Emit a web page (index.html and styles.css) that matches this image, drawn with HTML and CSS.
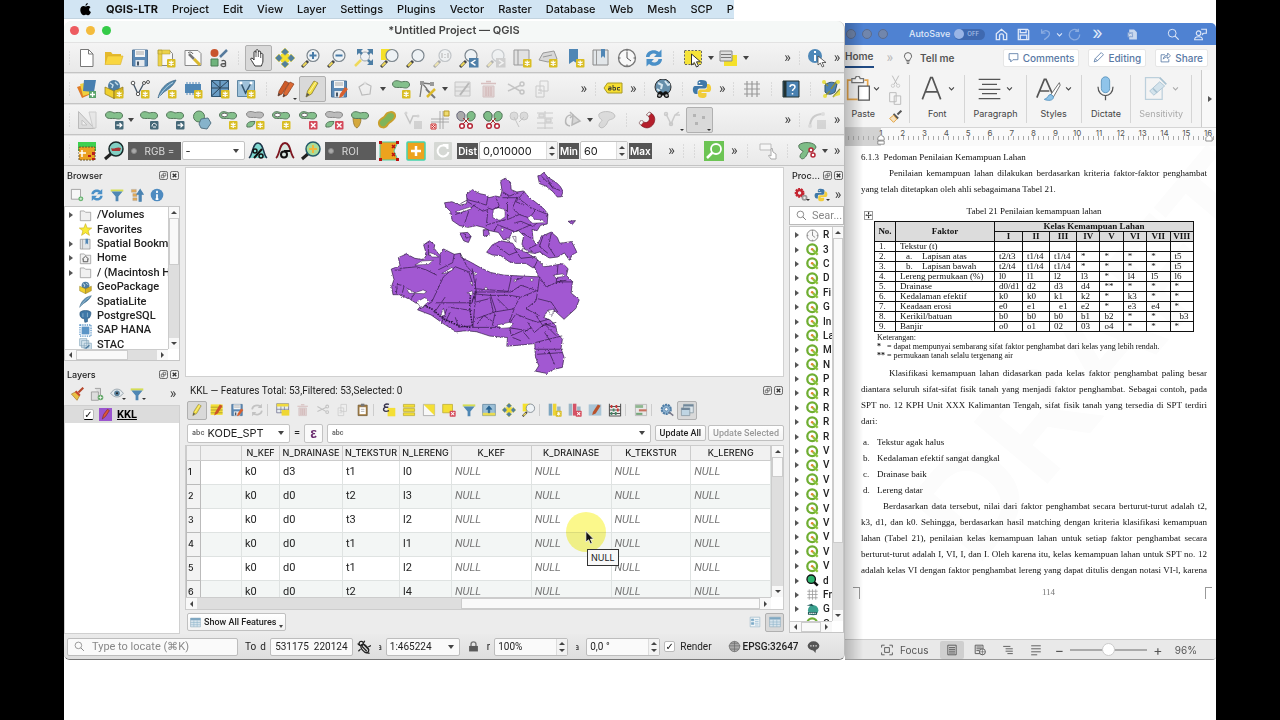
FILE: index.html
```html
<!DOCTYPE html>
<html lang="en">
<head>
<meta charset="utf-8">
<title>Untitled Project — QGIS</title>
<link rel="stylesheet" href="styles.css">
</head>
<body>
<svg class="defs" aria-hidden="true">
  <filter id="coast" x="-2%" y="-2%" width="104%" height="104%"><feTurbulence type="fractalNoise" baseFrequency=".14" numOctaves="2" seed="4"/><feDisplacementMap in="SourceGraphic" scale="7" xChannelSelector="R" yChannelSelector="G"/></filter>
  <symbol id="star" viewBox="0 0 20 20"><rect x="11" y="11" width="8.500" height="8.500" rx="1" fill="#d9bd22"/><path d="M15.200 12.500v5.500M12.800 13.800l4.800 3M17.600 13.800l-4.800 3" stroke="#fff" stroke-width="1.300"/></symbol>
  <symbol id="cross" viewBox="0 0 20 20"><rect x="11" y="11" width="8.500" height="8.500" rx="1" fill="#d4495a"/><path d="M13 13l4.500 4.500M17.500 13L13 17.500" stroke="#fff" stroke-width="1.500"/></symbol>
  <symbol id="move" viewBox="0 0 20 20"><rect x="11" y="11" width="8.500" height="8.500" rx="1" fill="#456878"/><path d="M12.500 15.200h5M15.500 13l2.200 2.200-2.200 2.200" stroke="#fff" fill="none" stroke-width="1.300"/></symbol>
  <symbol id="blob" viewBox="0 0 20 20"><path d="M1.500 5C2 1 7 1 10 3c4-1 9-1 8.500 3-1 4-5 3-7 2.500C8 8 2 10 1.500 5z" fill="#84c08c" stroke="#55775b"/></symbol>
  <symbol id="new" viewBox="0 0 20 20"><path d="M3.500 1.500h8l4.500 4.500v12.500H3.500z" fill="#fff" stroke="#777"/><path d="M11.500 1.500V6H16" fill="none" stroke="#777"/></symbol>
  <symbol id="open" viewBox="0 0 20 20"><path d="M1 16V4h6l1.500 2H17v3" fill="#e5b92c"/><path d="M1 16.500L3.500 8H19l-2.500 8.500z" fill="#f9d640" stroke="#d9ae28" stroke-width=".6"/></symbol>
  <symbol id="save" viewBox="0 0 20 20"><path d="M2.500 2h15v16h-15z" fill="#5b89b5" stroke="#4a7196"/><path d="M5 2h10v7H5z" fill="#f3f5f6"/><path d="M6 4h8M6 6h8" stroke="#aaa"/><path d="M5.500 12h9v6h-9z" fill="#e6eaee"/><path d="M8 13.500v4" stroke="#456" stroke-width="2"/></symbol>
  <symbol id="layout" viewBox="0 0 20 20"><path d="M2.500 2.500h11l3 3v12h-14z" fill="#f7f7f7" stroke="#888"/><path d="M2 2h4v16H2zM2 2h12v4H2z" fill="#ecd24a" stroke="#aa942e" stroke-width=".5"/><use href="#star"/></symbol>
  <symbol id="manager" viewBox="0 0 20 20"><path d="M2 2.500h13l3 3v12H2z" fill="#fafafa" stroke="#888"/><path d="M6 6l5 5" stroke="#777" stroke-width="2.500"/><path d="M11 11l6 6" stroke="#d9b82c" stroke-width="3"/><path d="M5 5a3 3 0 0 1 5 1" fill="none" stroke="#666"/></symbol>
  <symbol id="style" viewBox="0 0 20 20"><circle cx="5.500" cy="5" r="4" fill="#c8542c"/><path d="M11 9l7-7" stroke="#577b9d" stroke-width="2.500"/><path d="M2 11h7v7H2z" fill="#6fb47c" stroke="#4b7c55"/><path d="M12.500 13c2-1 4-.5 4 1v4c-2 1-4.500.5-4.500-1s3-1.500 4.500-1.500" fill="none" stroke="#555" stroke-width="1.300"/></symbol>
  <symbol id="hand" viewBox="0 0 20 20"><path d="M7 18c-2-3-3-5-4.500-7C3 9.500 5 10 6 12V4c.5-1.500 2-1 2 .5V2.500c.5-1.500 2-1 2.200 0L10.500 4c.5-1.500 2-1 2.200 0V6c.8-1 2-.6 2.200.5V13c0 2-1 3-1.500 5z" fill="#fff" stroke="#333"/><path d="M8 4.500V9M10.300 4v5M12.700 6v4" stroke="#333" stroke-width=".8"/></symbol>
  <symbol id="panfull" viewBox="0 0 20 20"><path d="M6 6h8v8H6z" fill="#f5e12a"/><path d="M10 0l4 4-4 3.500L6 4zM10 20l4-4-4-3.500L6 16zM0 10l4-4 3.500 4L4 14zM20 10l-4-4-3.500 4 3.500 4z" fill="#53809c" stroke="#d8cd50" stroke-width=".7"/></symbol>
  <symbol id="lens" viewBox="0 0 20 20"><path d="M7 13l-6 6" stroke="#444" stroke-width="3"/><path d="M5.500 14.500l-3.500 3.500" stroke="#efd95a" stroke-width="2"/><circle cx="12" cy="7.500" r="6" fill="#eef2f5" stroke="#7c868e" stroke-width="1.200"/></symbol>
  <symbol id="zin" viewBox="0 0 20 20"><use href="#lens"/><path d="M12 4v7M8.500 7.500h7" stroke="#477ba8" stroke-width="2"/></symbol>
  <symbol id="zout" viewBox="0 0 20 20"><use href="#lens"/><path d="M8.500 7.500h7" stroke="#477ba8" stroke-width="2"/></symbol>
  <symbol id="zfull" viewBox="0 0 20 20"><path d="M7 12l-6 6" stroke="#efd95a" stroke-width="2.500"/><circle cx="11" cy="8.500" r="4.500" fill="#eef2f5" stroke="#9aa4ab"/><path d="M3 1h6L3 7zM19 1v6l-6-6zM19 17h-6l6-6z" fill="#4d7ea5"/><path d="M4 2l4 4M18 2l-4 4M18 16l-4-4" stroke="#4d7ea5" stroke-width="2.500"/></symbol>
  <symbol id="zsel" viewBox="0 0 20 20"><path d="M1 1h11v11H1z" fill="#f5e12a"/><use href="#lens"/></symbol>
  <symbol id="znat" viewBox="0 0 20 20"><g opacity=".4"><use href="#lens"/><path d="M9 5v5M15 5v5M12 6v1M12 9v1" stroke="#555"/></g></symbol>
  <symbol id="zlast" viewBox="0 0 20 20"><use href="#lens"/><path d="M10 10h9.500v9.500H10z" fill="#4f7fa8"/><path d="M16.500 12l-4 2.700 4 2.700" fill="none" stroke="#fff" stroke-width="1.500"/></symbol>
  <symbol id="znext" viewBox="0 0 20 20"><g opacity=".35"><use href="#lens"/><path d="M10 10h9.500v9.500H10z" fill="#999"/><path d="M13 12l4 2.700-4 2.700" fill="none" stroke="#fff" stroke-width="1.500"/></g></symbol>
  <symbol id="mapnew" viewBox="0 0 20 20"><path d="M2 2h15v15H2z" fill="#e2e2e2" stroke="#999"/><path d="M6 2v15" stroke="#999"/><use href="#star"/></symbol>
  <symbol id="map3d" viewBox="0 0 20 20"><path d="M1 12L5 5l11-2 3 8-9 3z" fill="#d8d8d8" stroke="#999"/><path d="M5 9l9-2" stroke="#999"/><use href="#star"/></symbol>
  <symbol id="bmnew" viewBox="0 0 20 20"><path d="M4 1h9v15l-4.500-3L4 16z" fill="#4f86b5"/><use href="#star"/></symbol>
  <symbol id="bm" viewBox="0 0 20 20"><path d="M2 2h15v15H2z" fill="#e2e6e9" stroke="#888"/><path d="M5.500 2v15" stroke="#999"/><path d="M10 1h4v9l-2-2-2 2z" fill="#4f86b5"/></symbol>
  <symbol id="clock" viewBox="0 0 20 20"><circle cx="10" cy="10" r="8.500" fill="#f8f8f8" stroke="#777" stroke-width="1.300"/><path d="M10 4v6l4 3M10 2v1.500M10 16.500V18M2 10h1.500M16.500 10H18" fill="none" stroke="#555"/></symbol>
  <symbol id="refresh" viewBox="0 0 20 20"><path d="M2 9C2 3 10 0 15 4l2.500-2.500V9H10l2.500-2.500C9.500 4.500 6 6 5.500 9zM18 11c0 6-8 9-13 5l-2.500 2.500V11H10l-2.500 2.500C10.500 15.500 14 14 14.500 11z" fill="#4a90c8"/></symbol>
  <symbol id="refreshg" viewBox="0 0 20 20"><g opacity=".35"><path d="M3 9c1-6 8-7 12-4M17 11c-1 6-8 7-12 4" fill="none" stroke="#777" stroke-width="2.500"/><path d="M17 1v6h-6zM3 19v-6h6z" fill="#777"/></g></symbol>
  <symbol id="select" viewBox="0 0 20 20"><path d="M1.500 2.500h17v14h-17z" fill="#f5e338" stroke="#666" stroke-dasharray="2 1.500"/><path d="M8.500 6v11l2.800-2.500L13.500 19l2-1-2-4.200h4z" fill="#fff" stroke="#333"/></symbol>
  <symbol id="selform" viewBox="0 0 20 20"><path d="M6 7h13v11H6z" fill="#f5e12a"/><path d="M2 3h12v10H2z" fill="#ddd" stroke="#888"/><path d="M3 6.500h10M3 9.500h10" stroke="#777"/></symbol>
  <symbol id="info" viewBox="0 0 20 20"><circle cx="8" cy="8" r="7" fill="#4e88b8"/><path d="M8 3v2M8 7v6" stroke="#fff" stroke-width="2"/><path d="M11 8v9l2.300-2 2 4 1.600-.8-1.800-3.700H19z" fill="#fff" stroke="#444" stroke-width=".8"/></symbol>
  <symbol id="dsm" viewBox="0 0 20 20"><path d="M0 8l9-3 5 10-9 4z" fill="#e07b26"/><path d="M3 5l9-2 3 11-9 3z" fill="#efd03e"/><path d="M7 1h12l-2 12-11-1z" fill="#477fb0"/><path d="M12 12h7v7h-7z" fill="#5aa36a"/><path d="M15.500 13v5M13 15.500h5" stroke="#fff" stroke-width="1.300"/></symbol>
  <symbol id="gpkg" viewBox="0 0 20 20"><circle cx="10" cy="7" r="6" fill="#4d7da2"/><path d="M6 4l3 2-1 3M11 3l3 3" stroke="#c4dcea" stroke-width="1.500" fill="none"/><path d="M1 8l9 4v7.500L1 15z" fill="#f0d02e" stroke="#8a7720" stroke-width=".7"/><path d="M19 8l-9 4v7.500l9-4.500z" fill="#d8b322" stroke="#8a7720" stroke-width=".7"/></symbol>
  <symbol id="gpkgnew" viewBox="0 0 20 20"><use href="#gpkg"/><use href="#star"/></symbol>
  <symbol id="shp" viewBox="0 0 20 20"><path d="M3 4l5 11 6-11 3-1" fill="none" stroke="#456" stroke-width="1.300"/><circle cx="3" cy="4" r="1.800" fill="#fff" stroke="#555"/><circle cx="14" cy="4" r="1.500" fill="#fff" stroke="#555"/><circle cx="18" cy="3" r="1.500" fill="#fff" stroke="#555"/><circle cx="8" cy="15" r="1.700" fill="#fff" stroke="#555"/><use href="#star"/></symbol>
  <symbol id="feather" viewBox="0 0 20 20"><path d="M1 19C3 10 9 3 19 1c-2 5-7 9-12 12z" fill="#5489ad" stroke="#39627f" stroke-width=".7"/><path d="M2 18C6 11 10 7 16 3.500" stroke="#b5d0e2" fill="none"/></symbol>
  <symbol id="feathernew" viewBox="0 0 20 20"><use href="#feather"/><use href="#star"/></symbol>
  <symbol id="chip" viewBox="0 0 20 20"><path d="M2 5h16v9H2z" fill="#4f86b5"/><path d="M4 3v13M7 3v13M10 3v13M13 3v13M16 3v13" stroke="#4f86b5"/><use href="#star"/></symbol>
  <symbol id="mesh" viewBox="0 0 20 20"><path d="M1.500 1.500h17v16h-17z" fill="#6a9dc5" stroke="#2f5572"/><path d="M1.500 9h17M10 1.500v16M1.500 1.500L10 9l8.500-7.500M1.500 17L10 9" stroke="#2a4357" fill="none"/><use href="#star"/></symbol>
  <symbol id="virt" viewBox="0 0 20 20"><path d="M1.500 1.500h17v16h-17z" fill="#9fc2da" stroke="#5e86a2"/><path d="M5 4l4.500 10L15 4" fill="none" stroke="#33556e" stroke-width="1.500"/><circle cx="5" cy="4" r="1.500" fill="#fff"/><circle cx="15" cy="4" r="1.500" fill="#fff"/><use href="#star"/></symbol>
  <symbol id="pencils" viewBox="0 0 20 20"><path d="M2 17l1-5L9 2l4 2-7 11z" fill="#ce5b29" stroke="#853a1a" stroke-width=".7"/><path d="M7 18l1-5 6-10 4 2-7 11z" fill="#dc6a35" stroke="#853a1a" stroke-width=".7"/><path d="M2 17l.6-3 2 1.500zM7 18l.6-3 2 1.500z" fill="#444"/></symbol>
  <symbol id="pencil" viewBox="0 0 20 20"><path d="M4 18l1.500-6L12 2l4 2-6.500 11z" fill="#f0dd42" stroke="#877a34" stroke-width=".8"/><path d="M4 18l1-4 2.500 1.500z" fill="#555"/><path d="M7.500 13L14 3" stroke="#fff6a0"/></symbol>
  <symbol id="savepen" viewBox="0 0 20 20"><use href="#save"/><path d="M10 19l1-4 5-7 3 2-5.500 7.500z" fill="#d9602e"/></symbol>
  <symbol id="poly" viewBox="0 0 20 20"><path d="M4 8l6-4 6 3-1 8-8 1z" fill="none" stroke="#bbb" stroke-width="1.200"/><circle cx="10" cy="4" r="1.500" fill="#ddd"/></symbol>
  <symbol id="addf" viewBox="0 0 20 20"><use href="#blob"/><use href="#star"/></symbol>
  <symbol id="vertex" viewBox="0 0 20 20"><path d="M3 18L5 4l10 1M5 4l5 6" stroke="#777" fill="none" stroke-width="1.300"/><path d="M3 2h4v4H3zM13 3h4v4h-4z" fill="#999"/><path d="M9 10l9 9" stroke="#777" stroke-width="2"/><path d="M18 10l-8 8" stroke="#dcba2a" stroke-width="2.500"/></symbol>
  <symbol id="gform" viewBox="0 0 20 20"><g opacity=".4"><path d="M2 3h15v14H2z" fill="#ddd" stroke="#888"/><path d="M2 8h15M2 12h15" stroke="#888"/><path d="M7 16l9-12" stroke="#666" stroke-width="2"/></g></symbol>
  <symbol id="trash" viewBox="0 0 20 20"><g opacity=".35"><path d="M4 7h11v11H4z" fill="#c9a0a0" stroke="#a77"/><path d="M2 4.500h15M7 8v9M9.500 8v9M12 8v9M7 2.500h5" stroke="#a66" stroke-width="1.500"/></g></symbol>
  <symbol id="cut" viewBox="0 0 20 20"><g opacity=".35" fill="none" stroke="#777" stroke-width="1.500"><path d="M2 5l12 7M2 12l13-6"/><circle cx="16" cy="5" r="2"/><circle cx="16" cy="13" r="2"/></g></symbol>
  <symbol id="copy" viewBox="0 0 20 20"><g opacity=".35"><path d="M7 2h8v10H7zM3 7h8v11H3z" fill="#f2f2f2" stroke="#888"/><path d="M5 11h4M5 14h4" stroke="#888"/></g></symbol>
  <symbol id="paste" viewBox="0 0 20 20"><path d="M3 3h13v15H3z" fill="#a87f42" stroke="#6c542f"/><path d="M5 6h9v10H5z" fill="#fff"/><path d="M7 1h5v4H7z" fill="#777"/><path d="M7 9h5M7 12h5" stroke="#999"/></symbol>
  <symbol id="label" viewBox="0 0 20 20"><path d="M4.500 4H19v10H4.500L1 9z" fill="#f6de32" stroke="#a99a24"/><path d="M5.500 8h2.500v3H5.500V9.500H8M10 6v5h2.500V8.500H10M17 8.500h-2.500V11H17" fill="none" stroke="#443"/></symbol>
  <symbol id="bino" viewBox="0 0 20 20"><circle cx="10" cy="8" r="8" fill="#668fab" stroke="#333"/><path d="M5 4l4 2-1 4M12 2l3 4 2-1M4 10l3 2" stroke="#d6e6ef" stroke-width="2" fill="none"/><path d="M4 18c0-6 4-7 6-4 2-3 6-2 6 4-2 2-5 1-5.500-2h-1C9 19 6 20 4 18z" fill="#111"/><circle cx="6.500" cy="16.500" r="1.300" fill="#bbb"/><circle cx="13.500" cy="16.500" r="1.300" fill="#bbb"/></symbol>
  <symbol id="py" viewBox="0 0 20 20"><path d="M9.500 1c-4 0-4 2-4 3v2h5v1H3C0 7 0 15 4 15h1.500v-3c0-2 1-2.500 3-2.500h4c2 0 2.500-1.500 2.500-3V4c0-2-2-3-5.500-3z" fill="#3f78a8"/><path d="M10.500 19c4 0 4-2 4-3v-2h-5v-1H17c3 0 3-8-1-8h-1v3c0 2-1 2.500-3 2.500H8.500C7 10.500 6 12 6 13v3c0 2 1.500 3 4.500 3z" fill="#f1cd3b"/><circle cx="7.500" cy="3.500" r=".8" fill="#fff"/></symbol>
  <symbol id="grid" viewBox="0 0 20 20"><path d="M2 5h16M2 10h16M2 15h16M5 2v16M10 2v16M15 2v16" stroke="#999" stroke-width="1.200"/></symbol>
  <symbol id="help" viewBox="0 0 20 20"><path d="M2 2h16v16H2z" fill="#4a81b0" stroke="#233"/><path d="M4 2v16" stroke="#233" stroke-width="3"/><path d="M9 8c0-3 5-3 5 0 0 2-2.500 2-2.500 4M11.500 14v1.500" fill="none" stroke="#fff" stroke-width="1.500"/></symbol>
  <symbol id="sketch" viewBox="0 0 20 20"><path d="M4 6c5-4 8-3 12-1l-2 8c-4 3-7 3-10 0z" fill="#4b82b4" stroke="#33566f"/><path d="M3 3l4 4M16 2l-6 8M4 17l5-5M19 10l-7 8" stroke="#888d3c" stroke-width="1.500"/><circle cx="3" cy="3" r="2" fill="#e8df4a"/><circle cx="17" cy="3" r="2" fill="#e8df4a"/><circle cx="4" cy="17" r="2" fill="#e8df4a"/><path d="M12 18l7-7v5z" fill="#e8df4a"/></symbol>
  <symbol id="tri" viewBox="0 0 20 20"><g opacity=".5"><path d="M1.500 1.500l16 17h-16z" fill="#ccc" stroke="#888"/><path d="M5 10l5 5H5z" fill="#f4f4f4" stroke="#999"/><path d="M12 2h7v16h-3z" fill="#ddd" stroke="#aaa"/></g></symbol>
  <symbol id="mvf" viewBox="0 0 20 20"><use href="#blob"/><use href="#move"/></symbol>
  <symbol id="rotf" viewBox="0 0 20 20"><use href="#blob"/><rect x="11" y="11" width="8.500" height="8.500" rx="1" fill="#456878"/><path d="M13 16.500c0-4 4-4 4.500-1M17 17h-3" fill="none" stroke="#fff"/></symbol>
  <symbol id="simp" viewBox="0 0 20 20"><circle cx="7" cy="6.500" r="5.500" fill="#84c08c" stroke="#55775b"/><path d="M9 9l7-1 3 5-4 6-6-1-2-4z" fill="#86b3cb" stroke="#557585"/></symbol>
  <symbol id="ring" viewBox="0 0 20 20"><use href="#blob"/><ellipse cx="6.500" cy="5" rx="3" ry="1.800" fill="#fff" stroke="#666"/><use href="#star"/></symbol>
  <symbol id="part" viewBox="0 0 20 20"><path d="M1.500 4C2 1 7 1 10 2.500c4-1 9-.5 8.500 2.500-1 4-5 3-7 2.500C8 7 2 9 1.500 4z" fill="#bbb" stroke="#888"/><path d="M2 17c-1-4 2-6 8-5.500-1 4-3 6-8 5.500z" fill="#84c08c" stroke="#55775b"/><use href="#star"/></symbol>
  <symbol id="delring" viewBox="0 0 20 20"><use href="#blob"/><ellipse cx="6.500" cy="5" rx="3" ry="1.800" fill="#fff" stroke="#666"/><use href="#cross"/></symbol>
  <symbol id="delpart" viewBox="0 0 20 20"><path d="M1.500 4C2 1 7 1 10 2.500c4-1 9-.5 8.500 2.500-1 4-5 3-7 2.500C8 7 2 9 1.500 4z" fill="#bbb" stroke="#888"/><path d="M2 17c-1-4 2-6 8-5.500-1 4-3 6-8 5.500z" fill="#84c08c" stroke="#55775b"/><use href="#cross"/></symbol>
  <symbol id="reshape" viewBox="0 0 20 20"><path d="M3 7c3 2 6 1 8 2 0 4-2 8-4 9-3-1-4-6-4-11z" fill="#d4a83c" stroke="#896d28" stroke-width=".7"/><use href="#blob"/></symbol>
  <symbol id="offset" viewBox="0 0 20 20"><path d="M2 14c-1-5 4-5 6-8 2-5 9-5 10-1 1 5-5 6-7 9-3 5-8 4-9 0z" fill="#7fb45a" stroke="#c8a02d" stroke-width="2"/></symbol>
  <symbol id="splitf" viewBox="0 0 20 20"><g opacity=".4"><path d="M2 3l5 10 3-7h5" fill="none" stroke="#888" stroke-width="1.500"/><circle cx="3" cy="3" r="1.500" fill="#aaa"/><circle cx="15" cy="6" r="1.500" fill="#aaa"/><path d="M11 11h8v8h-8z" fill="#aaa"/></g></symbol>
  <symbol id="trim" viewBox="0 0 20 20"><path d="M1 9h18M10 1v18M13 1v18M1 12h18" stroke="#999" stroke-width=".8"/><path d="M14 1h5v5h-5z" fill="#efdc70" stroke="#ba9b28"/><path d="M1 14h5v5H1z" fill="#fbe4e4" stroke="#c33"/><path d="M2 15l3 3M5 15l-3 3" stroke="#c33"/></symbol>
  <symbol id="sciss" viewBox="0 0 20 20"><path d="M1 4c2-4 7-3 8 1 0 4-1 6-3 6C3 11 0 8 1 4z" fill="#aaa" stroke="#667"/><path d="M19 4c-2-4-7-3-8 1 0 4 1 6 3 6 3 0 6-3 5-7z" fill="#7ebd87" stroke="#55775b"/><path d="M7 14l6-6M13 14L7 8" stroke="#a33"/><circle cx="6" cy="16" r="2.300" fill="#fff" stroke="#b52838" stroke-width="1.500"/><circle cx="14" cy="16" r="2.300" fill="#fff" stroke="#b52838" stroke-width="1.500"/></symbol>
  <symbol id="sciss2" viewBox="0 0 20 20"><use href="#sciss"/><path d="M1 4c2-4 7-3 8 1 0 4-1 6-3 6C3 11 0 8 1 4z" fill="#7ebd87" stroke="#55775b"/></symbol>
  <symbol id="merge" viewBox="0 0 20 20"><g opacity=".4"><circle cx="5" cy="6" r="4" fill="#bbb" stroke="#888"/><circle cx="15" cy="6" r="4" fill="#bbb" stroke="#888"/><path d="M5 7l5 10M15 7l-5 5" stroke="#888"/></g></symbol>
  <symbol id="align" viewBox="0 0 20 20"><g opacity=".35" stroke="#888" fill="#ccc"><path d="M2 3h16M2 8h16M2 13h16M2 18h16M10 1v18"/><path d="M4 4h5v3H4zM11 9h5v3h-5z"/></g></symbol>
  <symbol id="rot" viewBox="0 0 20 20"><g opacity=".45" fill="none" stroke="#777" stroke-width="1.500"><path d="M9 5c-6 0-8 10-1 11M8 2l3 3-3 3"/><path d="M11 5l7 6-8 4z" fill="#bbb"/></g></symbol>
  <symbol id="gblob" viewBox="0 0 20 20"><g opacity=".4"><path d="M2 4c4-4 15-3 16 2-1 4-6 3-7 5-2 6-7 9-9 5 0-4 3-4 3-6C3 9 1 6 2 4z" fill="#bbb" stroke="#777"/></g></symbol>
  <symbol id="magnet" viewBox="0 0 20 20"><path d="M2 13l2.500-3c3 4 7 3 8-1 0-2-1-3-3-4L12 2c5 2 7 6 5 11-3 6-10 7-15 0z" fill="#b51f2c" stroke="#7c1420" stroke-width=".7"/><path d="M2 13l2.500-3 2 2-2.500 3zM9.500 5L12 2l2 1.500L11.500 6z" fill="#f6f6f6" stroke="#888" stroke-width=".5"/></symbol>
  <symbol id="snapdim" viewBox="0 0 20 20"><g opacity=".35" stroke="#888" fill="none" stroke-width="1.500"><path d="M3 4l5 10 4-9h5M12 5l4-3"/><circle cx="3" cy="4" r="1.500"/><circle cx="8" cy="14" r="1.500"/></g></symbol>
  <symbol id="dots" viewBox="0 0 20 20"><path d="M4 4h3v3H4zM13 6h3v3h-3zM6 12h3v3H6z" fill="#b4b4b4"/></symbol>
  <symbol id="arcg" viewBox="0 0 20 20"><g opacity=".35"><path d="M3 17C3 8 8 4 16 4" fill="none" stroke="#888" stroke-width="2"/><circle cx="3" cy="16" r="2" fill="#bbb"/><circle cx="16" cy="4" r="2" fill="#bbb"/><path d="M10 10h9v9h-9z" fill="#aaa"/></g></symbol>
  <symbol id="scp" viewBox="0 0 20 20"><path d="M1 1h18v9H1z" fill="#3ed050"/><path d="M2 6h16v13H2z" fill="#eba122" stroke="#6a592f" stroke-dasharray="2 1"/><path d="M5 9v7M2 12h7" stroke="#fff" stroke-width="1.500"/><path d="M11 14h3v2h-3zM15 11h3v3h-3zM15 17h3v2h-3z" fill="#b91f1f"/></symbol>
  <symbol id="scplens" viewBox="0 0 20 20"><path d="M8 12l-7 6" stroke="#222" stroke-width="3"/><circle cx="12" cy="8" r="7" fill="#82cfc3" stroke="#182828" stroke-width="1.500"/><path d="M7 7c3 2 6-2 10 0l-1 3H8z" fill="#a33"/></symbol>
  <symbol id="pct" viewBox="0 0 20 20"><path d="M1 17C5 14 4 2 10 2s5 12 9 15" fill="#7fd8d0" stroke="#1c3348" stroke-width="1.500"/><path d="M6 17l8-9" stroke="#111" stroke-width="2"/><circle cx="7" cy="10" r="2" fill="none" stroke="#111" stroke-width="1.500"/><circle cx="13" cy="15" r="2" fill="none" stroke="#111" stroke-width="1.500"/></symbol>
  <symbol id="sigma" viewBox="0 0 20 20"><path d="M1 17C5 14 4 2 10 2s5 12 9 15" fill="#d9e6e0" stroke="#7e1620" stroke-width="1.800"/><circle cx="9" cy="13.500" r="3" fill="none" stroke="#111" stroke-width="2"/><path d="M9 10h6" stroke="#111" stroke-width="2"/></symbol>
  <symbol id="scpzoom" viewBox="0 0 20 20"><path d="M8 12l-7 6" stroke="#222" stroke-width="3"/><circle cx="12" cy="8" r="7" fill="#a8dc9a" stroke="#235b6b" stroke-width="1.500"/><path d="M12 4v8M8 8h8" stroke="#f1b83c" stroke-width="2"/></symbol>
  <symbol id="roi" viewBox="0 0 20 20"><path d="M1 1h18l-4 9 4 9H1z" fill="#eda31e" stroke="#52c8a0"/><path d="M13 4l3 3M16 4l-3 3M13 12l3 3M16 12l-3 3" stroke="#b11" stroke-width="1.500"/><path d="M0 0h3v3H0zM17 0h3v3h-3zM0 17h3v3H0zM17 17h3v3h-3z" fill="#b11"/></symbol>
  <symbol id="plus" viewBox="0 0 20 20"><rect x="1" y="1" width="18" height="18" rx="1" fill="#eda31e" stroke="#45d3ac" stroke-width="1.500"/><path d="M10 5v10M5 10h10" stroke="#fff" stroke-width="2.500"/></symbol>
  <symbol id="undo" viewBox="0 0 20 20"><rect x="1" y="1" width="18" height="18" rx="1" fill="#d5d8d4"/><path d="M14 6a5.500 5.500 0 1 0 1.500 5M10 4h4.500v4" fill="none" stroke="#fff" stroke-width="2"/></symbol>
  <symbol id="green" viewBox="0 0 20 20"><path d="M0 0h20v20H0z" fill="#6cc454"/><circle cx="12" cy="8" r="5" fill="none" stroke="#fff" stroke-width="1.800"/><path d="M8.500 11.500L3 17" stroke="#fff" stroke-width="2.500"/></symbol>
  <symbol id="touch" viewBox="0 0 20 20"><path d="M2 3h11v6H2z" fill="#f6f6f6" stroke="#bbb"/><path d="M13 18c-2-3-3-3-2-4l2 1V8l1-1 1 4 3 2v5z" fill="#fff" stroke="#aaa"/></symbol>
  <symbol id="cutf" viewBox="0 0 20 20"><path d="M1 4c4-4 16-3 17 2-1 4-5 4-8 5-2 6-6 9-8 5 0-4 3-4 3-6C2 9 0 6 1 4z" fill="#7ebd87" stroke="#55775b"/><circle cx="13" cy="9" r="2" fill="#fff" stroke="#b52838" stroke-width="1.500"/><circle cx="15" cy="14" r="2" fill="#fff" stroke="#b52838" stroke-width="1.500"/></symbol>
  <symbol id="funnel" viewBox="0 0 20 20"><path d="M1 2h18v3H1z" fill="#d4dd54"/><path d="M2 5h16l-6 7v7H8v-7z" fill="#4f87b4"/></symbol>
  <symbol id="add" viewBox="0 0 20 20"><path d="M2 2h13v14H2z" fill="#f7f7f7" stroke="#888"/><circle cx="15.500" cy="15.500" r="3.500" fill="#5cb065"/><path d="M15.500 13.500v4M13.500 15.500h4" stroke="#fff"/></symbol>
  <symbol id="collapse" viewBox="0 0 20 20"><path d="M2 2h7v4H2zM4 8h6v4H4zM4 14h6v4H4z" fill="#e3aa56" stroke="#999" stroke-width=".5"/><path d="M13 19V9h-3l4.500-7L19 9h-3v10z" fill="#4a83b1" stroke="#4a83b1" stroke-width="1.500"/></symbol>
  <symbol id="i" viewBox="0 0 20 20"><circle cx="10" cy="10" r="9" fill="#4e8bc0"/><path d="M10 4v3M10 9v7M8 16h4" stroke="#fff" stroke-width="2.500"/></symbol>
  <symbol id="folder" viewBox="0 0 20 20"><path d="M2 3h6l2 2h8v13H2z" fill="#f0f0f0" stroke="#888"/></symbol>
  <symbol id="fav" viewBox="0 0 20 20"><path d="M10 1l2.500 6.500 7 .3-5.500 4.300 2 6.900-6-4-6 4 2-6.900L.5 7.800l7-.3z" fill="#f8ea36" stroke="#c9ae20"/></symbol>
  <symbol id="home" viewBox="0 0 20 20"><path d="M2 3h6l2 2h8v13H2z" fill="#f0f0f0" stroke="#888"/><path d="M5 11l5-4.500 5 4.500M6.500 10.500V15h7v-4.500" fill="none" stroke="#555" stroke-width="1.500"/></symbol>
  <symbol id="pg" viewBox="0 0 20 20"><path d="M2 3c4-3 12-3 16 0 1 4-1 7-2 9l-3 1v5l-4 1-1-6C3 14 0 8 2 3z" fill="#3f78a8" stroke="#2b5578"/><path d="M6 5v6M13 4v7" stroke="#a9c6dc"/></symbol>
  <symbol id="hana" viewBox="0 0 20 20"><path d="M4 4h12v12H4z" fill="#5b95c7"/><path d="M1.500 1.500h17v17h-17z" fill="none" stroke="#5b95c7" stroke-width="2" stroke-dasharray="2 1.500"/></symbol>
  <symbol id="stac" viewBox="0 0 20 20"><path d="M1 1h11v11H1zM4 4h11v11H4zM8 8h11v11H8z" fill="#d5e4ee" stroke="#7b9fb6"/><path d="M10 16l6-5" stroke="#47759a" stroke-width="2"/></symbol>
  <symbol id="brush" viewBox="0 0 20 20"><path d="M12 8l7-7" stroke="#b5462a" stroke-width="3"/><path d="M2 10l6-3 6 5-4 7z" fill="#e8c146" stroke="#ac7a2e"/><path d="M8 6l6 6" stroke="#c7442a" stroke-width="3"/></symbol>
  <symbol id="group" viewBox="0 0 20 20"><path d="M2 7h10v12H2zM7 2h8v11" fill="#ddd" stroke="#888"/><circle cx="15" cy="15" r="4" fill="#67aa6c"/><path d="M15 12.500v5M12.500 15h5" stroke="#fff"/></symbol>
  <symbol id="eye" viewBox="0 0 20 20"><path d="M1 9c5-8 13-8 18 0-5 7-13 7-18 0z" fill="#e5ebef" stroke="#7c8b95"/><circle cx="10" cy="9" r="4" fill="#587f9b"/><circle cx="10" cy="9" r="1.500" fill="#222"/></symbol>
  <symbol id="kkl" viewBox="0 0 20 20"><path d="M0 0h20v20H0z" fill="#9b55cf"/><path d="M5 17l2-7 6-8 3 2-6 9z" fill="#dd5636" stroke="#7c2c2c"/></symbol>
  <symbol id="q" viewBox="0 0 20 20"><circle cx="9.500" cy="9.500" r="7.500" fill="#fff" stroke="#6fae32" stroke-width="3.500"/><path d="M10.500 10.500L18 18" stroke="#8cc43c" stroke-width="3.500"/><circle cx="9.500" cy="9.500" r="2" fill="#e0852e"/></symbol>
  <symbol id="gear" viewBox="0 0 20 20"><circle cx="8" cy="7" r="5" fill="none" stroke="#c42531" stroke-width="4" stroke-dasharray="2.500 1"/><circle cx="8" cy="7" r="4" fill="none" stroke="#c42531" stroke-width="3"/><circle cx="15" cy="14" r="3" fill="none" stroke="#999" stroke-width="2.500"/></symbol>
  <symbol id="glens" viewBox="0 0 20 20"><path d="M12 12l6 6" stroke="#111" stroke-width="4"/><circle cx="8" cy="8" r="6.500" fill="#2cb36e" stroke="#111" stroke-width="2"/></symbol>
  <symbol id="gdal" viewBox="0 0 20 20"><circle cx="11" cy="11" r="8" fill="#39a08e"/><path d="M1 4l8-3 3 4M3 14h14v4H3z" fill="#245a5a"/><path d="M5 16h10" stroke="#fff" stroke-width="2" stroke-dasharray="2 1"/></symbol>
  <symbol id="form" viewBox="0 0 20 20"><path d="M1 2h18v16H1z" fill="#d8e5ed" stroke="#8da9ba"/><path d="M1 2h18v4H1z" fill="#7fa7c1"/><path d="M7 6v12M13 6v12M1 10h18M1 14h18" stroke="#8db3ca"/></symbol>
  <symbol id="formv" viewBox="0 0 20 20"><path d="M2 2h16v16H2z" fill="#f2f6f8" stroke="#8fb0c5"/><path d="M4 5h4v3H4zM4 11h4v3H4zM10 6h6M10 12h6M10 15h6M10 9h6" fill="#7ba9c7" stroke="#7ba9c7"/></symbol>
  <symbol id="edit2" viewBox="0 0 20 20"><path d="M1 2h17v15H1z" fill="#f4df35"/><path d="M1 6h17M1 10h17M1 14h17" stroke="#998e30"/><path d="M6 18l1-4 7-12 4 2-7 11z" fill="#ce5427"/></symbol>
  <symbol id="tabnew" viewBox="0 0 20 20"><path d="M1 1h17v13H1z" fill="#e7edf0" stroke="#668"/><path d="M1 1h17v4H1z" fill="#f0da3c"/><path d="M7 5v9M12 5v9M1 9h17" stroke="#778"/><path d="M8 10h11v8H8z" fill="#efd734"/></symbol>
  <symbol id="exsel" viewBox="0 0 20 20"><path d="M8 7h11v12H8z" fill="#f4df35"/><path d="M10 2C5 0 1 4 5 6c-5 2-3 8 5 5M5 6h4" fill="none" stroke="#38344c" stroke-width="2"/></symbol>
  <symbol id="selall" viewBox="0 0 20 20"><path d="M2 2h16v4H2zM2 8h16v4H2zM2 14h16v4H2z" fill="#f4df35" stroke="#b8a72c"/></symbol>
  <symbol id="inv" viewBox="0 0 20 20"><path d="M2 2h16v16H2z" fill="#f8f8f8" stroke="#999"/><path d="M2 2h16v16z" fill="#f4df35"/></symbol>
  <symbol id="desel" viewBox="0 0 20 20"><path d="M1 2h14v12H1z" fill="#f4df35" stroke="#b8a72c"/><use href="#cross"/></symbol>
  <symbol id="top" viewBox="0 0 20 20"><path d="M1 2h18v16H1z" fill="#9dc0d7" stroke="#557b96"/><path d="M1 14h18v4H1z" fill="#eadb50"/><path d="M9 14V9H6l4-5 4 5h-3v5z" fill="#276391" stroke="#276391"/></symbol>
  <symbol id="coln" viewBox="0 0 20 20"><path d="M1 1h5v17H1z" fill="#7da6c0"/><path d="M7 1h5v17H7z" fill="#eed535"/><path d="M13 5h5v13h-5z" fill="#9cb7c7"/><use href="#star"/></symbol>
  <symbol id="cold" viewBox="0 0 20 20"><path d="M1 1h5v17H1z" fill="#9cb7c7"/><path d="M7 1h5v17H7z" fill="#d45367"/><path d="M13 5h5v13h-5z" fill="#9cb7c7"/><use href="#cross"/></symbol>
  <symbol id="cole" viewBox="0 0 20 20"><path d="M1 2h18v16H1z" fill="#a9c5d6"/><path d="M6 17l1-4 7-11 4 2-7 11z" fill="#b9512a"/></symbol>
  <symbol id="abacus" viewBox="0 0 20 20"><path d="M2 1v18M18 1v18M2 5h16M2 10h16M2 15h16M2 18.500h16" stroke="#555" stroke-width="1.500"/><path d="M5 3v4M12 3v4M14 8v4" stroke="#c33" stroke-width="2.500"/><path d="M8 8v4M5 13v4M11 13v4" stroke="#486" stroke-width="2.500"/></symbol>
  <symbol id="cond" viewBox="0 0 20 20"><path d="M2 2h16v16H2z" fill="#e8e8e8" stroke="#aaa"/><path d="M2 3h11v4H2z" fill="#8fb790"/><path d="M7 9h11v3H7z" fill="#c87260"/><path d="M3 14h9v3H3z" fill="#76a67b"/></symbol>
  <symbol id="zoomset" viewBox="0 0 20 20"><circle cx="9" cy="9" r="6.500" fill="#8fb4d2" stroke="#4f7da5" stroke-width="3" stroke-dasharray="3 1"/><circle cx="9" cy="9" r="2.500" fill="#fff" stroke="#4374a0"/><path d="M13 13l6 5" stroke="#778" stroke-width="2"/></symbol>
  <symbol id="dock" viewBox="0 0 20 20"><path d="M5 2h14v12H5z" fill="#dce6ec" stroke="#7f909c"/><path d="M2 7h12v11H2z" fill="#bfd5e3" stroke="#7f909c"/><path d="M2 7h12v3H2zM5 2h14v3H5z" fill="#71879a"/></symbol>
  <symbol id="float" viewBox="0 0 10 10"><rect x=".5" y=".5" width="9" height="9" rx="2" fill="#f2f2f2" stroke="#555"/><path d="M4.500 2.500h3v3h-3zM2.500 4.500h3v3h-3z" fill="#f2f2f2" stroke="#555" stroke-width=".8"/></symbol>
  <symbol id="close" viewBox="0 0 10 10"><rect x=".5" y=".5" width="9" height="9" rx="2" fill="#f2f2f2" stroke="#555"/><path d="M3 3l4 4M7 3L3 7" stroke="#333" stroke-width="1.500"/></symbol>
  <symbol id="mag" viewBox="0 0 20 20"><circle cx="8" cy="8" r="6" fill="none" stroke="currentColor" stroke-width="1.500"/><path d="M12.500 12.500L18 18" stroke="currentColor" stroke-width="1.800"/></symbol>
  <symbol id="chev" viewBox="0 0 10 10"><path d="M1.500 3.500L5 7l3.500-3.500" fill="none" stroke="currentColor" stroke-width="1.500"/></symbol>
</svg>
<main class="screen">
<div class="desktop">
  <nav class="menubar">
    <svg class="apple" viewBox="0 0 20 20"><path d="M13.500 0c.2 2-1.500 4-3.500 4.200C9.800 2.200 11.500.3 13.500 0zM10.200 5.500c1 0 2-1 3.800-1 1.500 0 3 .8 3.700 2-3.200 2-2.700 6 .6 7.300-.8 2.300-2.400 5-4.300 5-1.300 0-1.800-.8-3.400-.8s-2.200.8-3.400.8C4.500 18.800 2 14.500 2 10.800c0-3.600 2.300-6 4.800-6 1.600 0 2.600.7 3.400.7z"/></svg>
    <a class="app" href="#">QGIS-LTR</a><a href="#">Project</a><a href="#">Edit</a><a href="#">View</a><a href="#">Layer</a><a href="#">Settings</a><a href="#">Plugins</a><a href="#">Vector</a><a href="#">Raster</a><a href="#">Database</a><a href="#">Web</a><a href="#">Mesh</a><a href="#">SCP</a><a href="#">Pr</a>
  </nav>
  <div class="windows">
  <section class="qgis">
    <header class="titlebar"><span class="light red"></span><span class="light amber"></span><span class="light green"></span><h1>*Untitled Project — QGIS</h1></header>
    <div class="toolbar">
      <i class="grip"></i>
      <button class="tb"><svg><use href="#new"/></svg></button><button class="tb"><svg><use href="#open"/></svg></button><button class="tb"><svg><use href="#save"/></svg></button><button class="tb"><svg><use href="#layout"/></svg></button><button class="tb"><svg><use href="#manager"/></svg></button><button class="tb"><svg><use href="#style"/></svg></button>
      <i class="grip wide"></i>
      <button class="tb on"><svg><use href="#hand"/></svg></button><button class="tb"><svg><use href="#panfull"/></svg></button><button class="tb"><svg><use href="#zin"/></svg></button><button class="tb"><svg><use href="#zout"/></svg></button><button class="tb"><svg><use href="#zfull"/></svg></button><button class="tb"><svg><use href="#zsel"/></svg></button><button class="tb"><svg><use href="#lens"/></svg></button><button class="tb"><svg><use href="#znat"/></svg></button><button class="tb"><svg><use href="#zlast"/></svg></button><button class="tb"><svg><use href="#znext"/></svg></button><button class="tb"><svg><use href="#mapnew"/></svg></button><button class="tb"><svg><use href="#map3d"/></svg></button><button class="tb"><svg><use href="#bmnew"/></svg></button><button class="tb"><svg><use href="#bm"/></svg></button><button class="tb"><svg><use href="#clock"/></svg></button><button class="tb"><svg><use href="#refresh"/></svg></button>
      <i class="grip wide"></i>
      <button class="tb"><svg><use href="#select"/></svg></button><button class="dd"></button><button class="tb"><svg><use href="#selform"/></svg></button><button class="dd"></button>
      <i class="gap30"></i><button class="more">»</button><i class="grip"></i><button class="tb"><svg><use href="#info"/></svg></button><button class="more">»</button>
    </div>
    <div class="toolbar">
      <i class="grip"></i>
      <button class="tb"><svg><use href="#dsm"/></svg></button><button class="tb"><svg><use href="#gpkgnew"/></svg></button><button class="tb"><svg><use href="#shp"/></svg></button><button class="tb"><svg><use href="#feathernew"/></svg></button><button class="tb"><svg><use href="#chip"/></svg></button><button class="tb"><svg><use href="#mesh"/></svg></button><button class="tb"><svg><use href="#virt"/></svg></button>
      <i class="grip wide"></i>
      <button class="tb sub"><svg><use href="#pencils"/></svg></button><button class="tb on"><svg><use href="#pencil"/></svg></button><button class="tb"><svg><use href="#savepen"/></svg></button><button class="tb"><svg><use href="#poly"/></svg></button><button class="dd"></button><button class="tb"><svg><use href="#addf"/></svg></button><button class="tb"><svg><use href="#vertex"/></svg></button><button class="dd"></button><button class="tb"><svg><use href="#gform"/></svg></button><button class="tb"><svg><use href="#trash"/></svg></button><button class="tb"><svg><use href="#cut"/></svg></button><button class="tb"><svg><use href="#copy"/></svg></button>
      <i class="gap20"></i><button class="more">»</button><i class="grip"></i><button class="tb"><svg><use href="#label"/></svg></button><button class="more">»</button><i class="grip"></i><button class="tb"><svg><use href="#bino"/></svg></button><i class="grip wide"></i><button class="tb"><svg><use href="#py"/></svg></button><button class="more">»</button><i class="grip"></i><button class="tb"><svg><use href="#grid"/></svg></button><i class="grip wide"></i><button class="tb"><svg><use href="#help"/></svg></button><i class="grip wide"></i><button class="tb"><svg><use href="#sketch"/></svg></button>
    </div>
    <div class="toolbar">
      <i class="grip"></i>
      <button class="tb"><svg><use href="#tri"/></svg></button><button class="tb"><svg><use href="#mvf"/></svg></button><button class="dd"></button><button class="tb"><svg><use href="#rotf"/></svg></button><button class="tb"><svg><use href="#mvf"/></svg></button><button class="tb"><svg><use href="#simp"/></svg></button><button class="tb"><svg><use href="#ring"/></svg></button><button class="tb"><svg><use href="#part"/></svg></button><button class="tb"><svg><use href="#ring"/></svg></button><button class="tb"><svg><use href="#delring"/></svg></button><button class="tb"><svg><use href="#delpart"/></svg></button><button class="tb"><svg><use href="#reshape"/></svg></button><button class="tb"><svg><use href="#offset"/></svg></button><button class="tb"><svg><use href="#splitf"/></svg></button><button class="tb"><svg><use href="#trim"/></svg></button><button class="tb"><svg><use href="#sciss"/></svg></button><button class="tb"><svg><use href="#sciss2"/></svg></button><button class="tb"><svg><use href="#merge"/></svg></button><button class="tb"><svg><use href="#align"/></svg></button><button class="tb"><svg><use href="#rot"/></svg></button><button class="dd"></button><button class="tb"><svg><use href="#gblob"/></svg></button>
      <i class="grip wide"></i><button class="tb"><svg><use href="#magnet"/></svg></button><button class="tb sub"><svg><use href="#snapdim"/></svg></button><button class="tb on sub"><svg><use href="#dots"/></svg></button>
      <i class="gap68"></i><button class="more">»</button><i class="grip"></i><button class="tb"><svg><use href="#arcg"/></svg></button><button class="more">»</button>
    </div>
    <div class="toolbar">
      <i class="grip"></i>
      <button class="tb"><svg><use href="#scp"/></svg></button><button class="tb"><svg><use href="#scplens"/></svg></button>
      <label class="dark"><input type="radio" name="rgb">RGB =</label>
      <span class="combo rgbsel"><select aria-label="RGB composite"><option>-</option></select><i class="tri"></i></span>
      <button class="tb"><svg><use href="#pct"/></svg></button><button class="tb"><svg><use href="#sigma"/></svg></button><button class="tb"><svg><use href="#scpzoom"/></svg></button>
      <label class="dark roi"><input type="radio" name="roi">ROI</label>
      <button class="tb"><svg><use href="#roi"/></svg></button><button class="tb"><svg><use href="#plus"/></svg></button><button class="tb"><svg><use href="#undo"/></svg></button>
      <label class="tag" for="dist">Dist</label><span class="spin w79"><input id="dist" value="0,010000"><i class="ud"></i></span>
      <label class="tag" for="min">Min</label><span class="spin w48"><input id="min" value="60"><i class="ud"></i></span>
      <span class="tag">Max</span>
      <i class="gap12"></i><button class="more">»</button><i class="grip"></i><i class="grip wide"></i><button class="tb"><svg><use href="#green"/></svg></button><button class="more">»</button><i class="grip wide"></i><button class="tb"><svg><use href="#touch"/></svg></button><i class="grip wide"></i><button class="tb"><svg><use href="#cutf"/></svg></button><button class="dd"></button><button class="more">»</button>
    </div>
    <div class="work">
      <aside class="left">
        <header class="dockhead"><h2>Browser</h2><svg><use href="#float"/></svg><svg><use href="#close"/></svg></header>
        <div class="docktools"><button><svg><use href="#add"/></svg></button><button><svg><use href="#refresh"/></svg></button><button><svg><use href="#funnel"/></svg></button><button><svg><use href="#collapse"/></svg></button><button><svg><use href="#i"/></svg></button></div>
        <div class="treebox browser">
          <ul class="tree">
            <li><i class="exp"></i><svg><use href="#folder"/></svg>/Volumes</li>
            <li><i></i><svg><use href="#fav"/></svg>Favorites</li>
            <li><i class="exp"></i><svg><use href="#bm"/></svg>Spatial Bookm</li>
            <li><i class="exp"></i><svg><use href="#home"/></svg>Home</li>
            <li><i class="exp"></i><svg><use href="#folder"/></svg>/ (Macintosh H</li>
            <li><i></i><svg><use href="#gpkg"/></svg>GeoPackage</li>
            <li><i></i><svg><use href="#feather"/></svg>SpatiaLite</li>
            <li><i></i><svg><use href="#pg"/></svg>PostgreSQL</li>
            <li><i></i><svg><use href="#hana"/></svg>SAP HANA</li>
            <li><i></i><svg><use href="#stac"/></svg>STAC</li>
          </ul>
          <div class="vbar"><i class="up"></i><b class="t47"></b><i class="down"></i></div>
          <div class="hbar"><i class="lt"></i><b class="t52"></b><i class="rt"></i></div>
        </div>
        <header class="dockhead second"><h2>Layers</h2><svg><use href="#float"/></svg><svg><use href="#close"/></svg></header>
        <div class="docktools"><button><svg><use href="#brush"/></svg></button><button><svg><use href="#group"/></svg></button><button class="sub"><svg><use href="#eye"/></svg></button><button class="sub"><svg><use href="#funnel"/></svg></button><button class="more end">»</button></div>
        <div class="layers"><label class="layer"><input type="checkbox" class="tick" checked><svg><use href="#kkl"/></svg><span>KKL</span></label></div>
      </aside>
      <div class="center">
        <svg class="map" viewBox="185 168 598 210">
          <g transform="translate(378 164) scale(.34)" fill="#a259d2" stroke="#2c1740" stroke-width="2" stroke-linejoin="round" filter="url(#coast)">
            <path d="M470 35l8-2 10-8 12 14 25 16 12 12 8 14-5 16-12 1-13-16-20-16-20-8zM560 170l22-2-10 12zM238 205l24-2 10 12-8 18-14-5zM308 195l15 0 4 16-18 4z"/>
            <path d="M193 115l22-3 25 10 18-4 2-8-2-20 18-14 22 12 18 4 9 8 20-5 13 3 6-18-5-30 14-8 16 12 2 22 17 7 20-3 15 18 20 15 25 20 12 15-2 30-20 4-10 16-15-4 3 30 12 20-10 16-20 3-15-25 5-25-15-15-20 5-10 20-15 2-15-22-25-5-20-10-20-5-25 5-25-5-22-15-5-27-14-14z"/>
            <path d="M318 262l17-22 25-12 35 7 10 15 25 8 20 14 18 10 4 24-17 2-20-13-30 0-20-5-25-18-25-2z"/>
            <path d="M445 250l25-12 10-23 30-13 18 16 7 17 25-3 10-2 8 15 8 17-14 8-8 16-15-22-20 12-25 3-28-18-18 5z"/>
            <path d="M35 312l26-10-5-24 24-11 25 13 25 4 10-14-9-30 17-12 16 12-2 10 16 20 12-18 32 16 18-3 2 12 28 14 30 17 30 14 40 8 60 3 42 2-12-30 10-20 20 20 20-3 35-6 15 15-5 20 18 18-4 34 24 20-10 26-35 32-20-18-10-10-20 3-10 20 20 8 15 15 5 25 15 16-4 28 9 26-5 30-25 5-20 13-35-7 10-16-10-26-2-40-38 4-45 4 2-26-52-4-40-13-30-3-30 3-40-25-35-25-40-15 20-25-25 5-15-10-35-15-18 0-4-25 7-20z"/>
            <g fill="none">
              <path d="M240 118l22-12 30 8 25 8 5-25M262 112l45 28 15-5-5 50M225 150l40-15 20-15M265 140l-15 45M320 130l15 5 20-8M345 98l10 25-8 12M365 100l45 0 40 30 50 20M362 80l25 15 23-10M375 165l-55 15M380 110l0 55 35-15 30 10 20-25M410 95l-15 35 20 20M430 82l-25 30 25 10M400 175l20-5 35 15 20-15M405 200l45-20M340 200l10-20 50 20M425 205l25 15M485 215l-10 30 25 20M510 205l-8 40 20 30M480 35l35 35 25 10M495 38l20 35M345 240l40 30 25-10M400 250l20 30 45-5M250 205l8 15 14-5"/>
              <path d="M190 335l-35 75-35 20M190 335l35-30 40 15 10 30M180 270l0 30M222 268l-5 25-40 20M60 310l50-5 30 10 30 15M145 240l0 30 30 5M275 310l12 65-10 110M287 340l-5 30 100 8 10-45M280 380l110 0 30-20 45 15M287 375l-15 40M165 412l110 0 5-20M160 445l35-50M200 430l-15 40M205 425l70 10M210 440l-15 30M278 385l50 5 60 0 30 5-20 35-60 10-10-45M330 390l15 45-10 45M285 410l40-10M285 460l55-20M275 485l105 0 60 10M400 430l-15 40 5 35M385 475l20-30 35 15 30 10 35-10M420 395l50-20 5-40M470 375l-5 30-30 25 40 20M475 335l20 30 35-15 45 0M530 300l-5 50 30-5M470 400l40 10 20 30M465 450l20 30 40-10M440 470l20 30 30-25 30 10M390 510l35-15 20 25M395 515l25 10M463 530l80-20M465 550l80 0M468 565l75-5M490 500l20 30M500 550l20 45M430 500l20-15M50 385l3-28 20 5-5 20M95 400l10-20M45 315l20 0M240 265l20 40 20 20M225 455l10 30 40-5M290 475l20-25 30 20M405 345l20-8M350 400l30 30M495 480l30 30"/>
              <path d="M110 410l45 20 35 30 45 20 35 5" stroke-dasharray="5 3" stroke-width="5"/>
              <path d="M270 380l-2 50 8 50" stroke-dasharray="5 3" stroke-width="4"/>
            </g>
            <g fill="#fff" stroke-width="1.500">
              <path d="M338 135l15-5 20 5 0 22-15 10-22-8zM225 142l45-15 3 6-35 12zM440 160l10-8 10 12 25 2 5 8-35 2-10-8zM105 300l20-12 35-2-15 12zM185 325l30-18 5 6-25 12zM80 368l15 8 10 6 25-8 10 5-8 6-45-2zM110 410l25-14 10 12-20 20zM190 428l5 20-15 5zM350 478l35-8 12 4-10 12-25 2zM515 330l30-4 3 8-25 3zM263 382l12-6 2 10-10 1zM268 350l8 0 0 12zM145 262l20 6 10 8-20 0zM425 250l30 15-30-5zM395 215l10 0 0 18zM375 220l12 0-5 10zM500 435l20-5-8 20z"/>
              <circle cx="402" cy="346" r="4"/><circle cx="452" cy="344" r="4"/><circle cx="284" cy="326" r="4"/><circle cx="316" cy="370" r="4"/><circle cx="365" cy="195" r="4"/>
            </g>
          </g>
        </svg>
        <section class="attr">
          <header class="dockhead"><h2>KKL — Features Total: 53,Filtered: 53,Selected: 0</h2><svg><use href="#float"/></svg><svg><use href="#close"/></svg></header>
          <div class="atools">
            <button class="on"><svg><use href="#pencil"/></svg></button><button><svg><use href="#edit2"/></svg></button><button><svg><use href="#savepen"/></svg></button><button><svg><use href="#refreshg"/></svg></button><i></i>
            <button><svg><use href="#tabnew"/></svg></button><button><svg><use href="#trash"/></svg></button><button><svg><use href="#cut"/></svg></button><button><svg><use href="#copy"/></svg></button><button><svg><use href="#paste"/></svg></button><i></i>
            <button><svg><use href="#exsel"/></svg></button><button><svg><use href="#selall"/></svg></button><button><svg><use href="#inv"/></svg></button><button><svg><use href="#desel"/></svg></button><button><svg><use href="#funnel"/></svg></button><button><svg><use href="#top"/></svg></button><button><svg><use href="#panfull"/></svg></button><button><svg><use href="#zsel"/></svg></button><i></i>
            <button><svg><use href="#coln"/></svg></button><button><svg><use href="#cold"/></svg></button><button><svg><use href="#cole"/></svg></button><button><svg><use href="#abacus"/></svg></button><i></i>
            <button><svg><use href="#cond"/></svg></button><i></i><button><svg><use href="#zoomset"/></svg></button><button class="on"><svg><use href="#dock"/></svg></button>
          </div>
          <div class="calc">
            <span class="combo field"><small>abc</small><select aria-label="Field"><option>KODE_SPT</option></select><i class="tri"></i></span><span>=</span><button class="eps">ε</button>
            <span class="combo expr"><small>abc</small><input aria-label="Expression"><i class="tri"></i></span>
            <button class="btn">Update All</button><button class="btn" disabled>Update Selected</button>
          </div>
          <div class="tablewrap">
            <div class="clip">
            <table class="grid">
              <colgroup><col class="c-no"><col class="c-blank"><col class="c-kef"><col class="c-dr"><col class="c-tx"><col class="c-lr"><col><col><col><col></colgroup>
              <thead><tr><th></th><th></th><th>N_KEF</th><th>N_DRAINASE</th><th>N_TEKSTUR</th><th>N_LERENG</th><th>K_KEF</th><th>K_DRAINASE</th><th>K_TEKSTUR</th><th>K_LERENG</th></tr></thead>
              <tbody>
                <tr><th>1</th><td></td><td>k0</td><td>d3</td><td>t1</td><td>l0</td><td><em>NULL</em></td><td><em>NULL</em></td><td><em>NULL</em></td><td><em>NULL</em></td></tr>
                <tr><th>2</th><td></td><td>k0</td><td>d0</td><td>t2</td><td>l3</td><td><em>NULL</em></td><td><em>NULL</em></td><td><em>NULL</em></td><td><em>NULL</em></td></tr>
                <tr><th>3</th><td></td><td>k0</td><td>d0</td><td>t3</td><td>l2</td><td><em>NULL</em></td><td><em>NULL</em></td><td><em>NULL</em></td><td><em>NULL</em></td></tr>
                <tr><th>4</th><td></td><td>k0</td><td>d0</td><td>t1</td><td>l1</td><td><em>NULL</em></td><td><em>NULL</em></td><td><em>NULL</em></td><td><em>NULL</em></td></tr>
                <tr><th>5</th><td></td><td>k0</td><td>d0</td><td>t1</td><td>l2</td><td><em>NULL</em></td><td><em>NULL</em></td><td><em>NULL</em></td><td><em>NULL</em></td></tr>
                <tr><th>6</th><td></td><td>k0</td><td>d0</td><td>t2</td><td>l4</td><td><em>NULL</em></td><td><em>NULL</em></td><td><em>NULL</em></td><td><em>NULL</em></td></tr>
              </tbody>
            </table>
            </div>
            <div class="vbar"><i class="up"></i><b class="t20"></b><i class="down"></i></div>
            <div class="hbar"><i class="lt"></i><s></s><b class="rest"></b><i class="rt"></i></div>
            <div class="pointer"><span class="halo"></span><svg viewBox="0 0 10 16"><path d="M1 1v12l3-2.500 2 4.500 2-1-2-4.200h3.500z" fill="#111" stroke="#fff" stroke-width=".8"/></svg><span class="tip">NULL</span></div>
          </div>
          <footer class="afoot"><button class="btn showall"><svg><use href="#form"/></svg>Show All Features<i class="tri small"></i></button><button class="view"><svg><use href="#formv"/></svg></button><button class="view on"><svg><use href="#form"/></svg></button></footer>
        </section>
      </div>
      <aside class="right">
        <header class="dockhead"><h2>Proc...</h2><svg><use href="#float"/></svg><svg><use href="#close"/></svg></header>
        <div class="docktools"><button class="sub"><svg><use href="#gear"/></svg></button><button class="sub"><svg><use href="#py"/></svg></button><button class="more end">»</button></div>
        <label class="psearch"><svg><use href="#mag"/></svg><input placeholder="Sear..." aria-label="Search"></label>
        <div class="treebox proc">
          <ul class="tree">
            <li><i class="exp"></i><svg><use href="#clock"/></svg>R</li>
            <li><i class="exp"></i><svg><use href="#q"/></svg>3</li><li><i class="exp"></i><svg><use href="#q"/></svg>C</li><li><i class="exp"></i><svg><use href="#q"/></svg>D</li><li><i class="exp"></i><svg><use href="#q"/></svg>Fi</li><li><i class="exp"></i><svg><use href="#q"/></svg>G</li><li><i class="exp"></i><svg><use href="#q"/></svg>In</li><li><i class="exp"></i><svg><use href="#q"/></svg>La</li><li><i class="exp"></i><svg><use href="#q"/></svg>M</li><li><i class="exp"></i><svg><use href="#q"/></svg>N</li><li><i class="exp"></i><svg><use href="#q"/></svg>P</li><li><i class="exp"></i><svg><use href="#q"/></svg>R</li><li><i class="exp"></i><svg><use href="#q"/></svg>R</li><li><i class="exp"></i><svg><use href="#q"/></svg>R</li><li><i class="exp"></i><svg><use href="#q"/></svg>R</li><li><i class="exp"></i><svg><use href="#q"/></svg>V</li><li><i class="exp"></i><svg><use href="#q"/></svg>V</li><li><i class="exp"></i><svg><use href="#q"/></svg>V</li><li><i class="exp"></i><svg><use href="#q"/></svg>V</li><li><i class="exp"></i><svg><use href="#q"/></svg>V</li><li><i class="exp"></i><svg><use href="#q"/></svg>V</li><li><i class="exp"></i><svg><use href="#q"/></svg>V</li><li><i class="exp"></i><svg><use href="#q"/></svg>V</li><li><i class="exp"></i><svg><use href="#q"/></svg>V</li>
            <li><i class="exp"></i><svg><use href="#glens"/></svg>d</li><li><i class="exp"></i><svg><use href="#grid"/></svg>Fr</li><li><i class="exp"></i><svg><use href="#gdal"/></svg>G</li><li><i class="exp"></i><svg><use href="#q"/></svg>G</li>
          </ul>
          <div class="vbar"><i class="up"></i><b class="t305"></b><i class="down"></i></div>
          <div class="hbar"><i class="lt"></i><b class="rest"></b><i class="rt"></i></div>
        </div>
      </aside>
    </div>
    <footer class="status">
      <label class="locate"><svg><use href="#mag"/></svg><input placeholder="Type to locate (⌘K)" aria-label="Locate"></label>
      <span>To</span><span>d</span><input class="coord" value="531175  220124" aria-label="Coordinate">
      <svg class="bug" viewBox="0 0 20 20"><g fill="none" stroke="#222" stroke-width="1.800"><ellipse cx="11" cy="12" rx="4" ry="7" transform="rotate(-40 11 12)"/><path d="M7 9l7 7M10 7l7 7M4 8L1 5M9 5l2-4M16 10l4-2M14 18l4 1M5 13l-3 3"/><circle cx="6" cy="5" r="3"/></g></svg>
      <span class="cut">a</span><span class="combo scale"><select aria-label="Scale"><option>1:465224</option></select><i class="tri"></i></span>
      <svg class="lock" viewBox="0 0 20 20"><path d="M5.500 10V6a4.500 4.500 0 0 1 9 0v4" fill="none" stroke="#777" stroke-width="2.500"/><path d="M2 9h16v10H2z" fill="#5a5a5a"/></svg>
      <span>r</span><span class="spin"><input value="100%" aria-label="Magnifier"><i class="ud"></i></span>
      <span class="cut">a</span><span class="spin rotation"><input value="0,0 °" aria-label="Rotation"><i class="ud"></i></span>
      <label class="render"><input type="checkbox" class="tick" checked>Render</label>
      <button class="crs"><svg viewBox="0 0 20 20"><circle cx="10" cy="10" r="8" fill="#aaa" stroke="#666"/><path d="M1 9h18M4 5h12M3 14h14M10 2v16" stroke="#666"/></svg>EPSG:32647</button>
      <button class="msg"><svg viewBox="0 0 20 20"><ellipse cx="10" cy="9" rx="9" ry="7" fill="#555"/><path d="M8 14l6 0-1 6z" fill="#555"/><path d="M5 9h2M9 9h2M13 9h2" stroke="#eee" stroke-width="2"/></svg></button>
    </footer>
  </section>
  <section class="word">
    <header class="wtitle">
      <span class="wdot"></span><span class="wdot"></span><span class="wdot"></span>
      <label class="auto">AutoSave <span class="toggle"><input type="checkbox">OFF</span></label>
      <button><svg viewBox="0 0 20 20"><path d="M2 9l8-7 8 7v9h-5v-6a3 3 0 0 0-6 0v6H2z" fill="none" stroke="#dfe8f8" stroke-width="2"/></svg></button>
      <button><svg viewBox="0 0 20 20"><path d="M2 2h14l2 2v14H2zM5 2v5h9V2M5 18v-7h10v7" fill="none" stroke="#dfe8f8" stroke-width="2"/></svg></button>
      <button class="faint"><svg viewBox="0 0 20 20"><path d="M4 2v6h6M4 8c5-7 13-3 12 2-1 4-5 6-8 8" fill="none" stroke="#dfe8f8" stroke-width="2"/></svg></button>
      <svg class="chev"><use href="#chev"/></svg>
      <button class="faint"><svg viewBox="0 0 20 20"><path d="M15 4a8 8 0 1 0 3 6M11 5h5V1" fill="none" stroke="#dfe8f8" stroke-width="2"/></svg></button>
      <span class="wmore">»</span>
      <svg class="wdoc" viewBox="0 0 20 20"><path d="M4 1h9l5 5v13H4z" fill="#c9d8ef"/><path d="M1 6h10v9H1z" fill="#8ca8d4"/><path d="M3 8l1.500 5L6 9l1.500 4L9 8" fill="none" stroke="#fff"/></svg>
      <button class="find"><svg><use href="#mag"/></svg></button>
      <button><svg viewBox="0 0 20 20"><circle cx="7" cy="8" r="3.500" fill="none" stroke="#dfe8f8" stroke-width="1.700"/><path d="M1 18c0-6 12-6 12 0zM11 2h8v6h-4l-2 2V8" fill="none" stroke="#dfe8f8" stroke-width="1.700"/></svg></button>
    </header>
    <div class="wtabs">
      <a class="hometab" href="#">Home</a><span class="dimmore">»</span>
      <svg viewBox="0 0 20 20"><path d="M7 14c0-3-3-4-3-7a6 6 0 0 1 12 0c0 3-3 4-3 7zM7.500 16.500h5M8 19h4" fill="none" stroke="#555" stroke-width="1.500"/></svg><a class="tell" href="#">Tell me</a>
      <button class="pill"><svg viewBox="0 0 20 20"><path d="M2 3h16v11H9l-4 4v-4H2z" fill="none" stroke="#5678a5" stroke-width="1.500"/></svg>Comments</button><button class="pill"><svg viewBox="0 0 20 20"><path d="M2 18l2-6L15 1l4 4L8 16zM4 12l4 4" fill="none" stroke="#5678a5" stroke-width="1.500"/></svg>Editing</button><button class="pill"><svg viewBox="0 0 20 20"><path d="M9 5H2v13h14v-5M6 13c0-5 4-7 8-7V2l5 5-5 5V9c-4 0-6 1-8 4z" fill="none" stroke="#5678a5" stroke-width="1.500"/></svg>Share</button>
    </div>
    <div class="ribbon">
      <div class="rg paste"><div><svg class="big" viewBox="0 0 30 30"><path d="M6 5H2v23h12M22 5h4v7" fill="none" stroke="#e5a54b" stroke-width="2"/><path d="M7 3h4c1-4 5-4 6 0h4v5H7z" fill="#fff" stroke="#777" stroke-width="1.500"/><path d="M15 12h13v17H15z" fill="#fff" stroke="#555" stroke-width="1.500"/></svg><svg class="chev"><use href="#chev"/></svg></div><span>Paste</span></div>
      <div class="clipb"><svg viewBox="0 0 20 20"><path d="M5 1l7 13M15 1L8 14" stroke="#bbb" stroke-width="1.500"/><circle cx="6" cy="16.500" r="2.500" fill="none" stroke="#bbb"/><circle cx="14" cy="16.500" r="2.500" fill="none" stroke="#bbb"/></svg><svg viewBox="0 0 20 20"><path d="M1 1h10v14H1zM8 6h10v13H8z" fill="#f6f6f6" stroke="#bbb" stroke-width="1.500"/></svg><svg viewBox="0 0 20 20"><path d="M19 1l-6 6" stroke="#555" stroke-width="3"/><path d="M7 6l7 7" stroke="#555" stroke-width="3"/><path d="M7 8l5 6-5 5-6-6z" fill="#f8e3bf" stroke="#e0a040" stroke-width="1.500"/></svg></div>
      <div class="rg"><div><svg class="big" viewBox="0 0 30 30"><path d="M4 28L14 2h2l10 26M8 19h14" fill="none" stroke="#555" stroke-width="2"/></svg><svg class="chev"><use href="#chev"/></svg></div><span>Font</span></div>
      <div class="rg wide"><div><svg class="big" viewBox="0 0 30 30"><path d="M2 4h26M6 10h18M2 16h26M6 21h18M2 27h26" stroke="#555" stroke-width="1.500"/></svg><svg class="chev"><use href="#chev"/></svg></div><span>Paragraph</span></div>
      <div class="rg"><div><svg class="big" viewBox="0 0 30 30"><path d="M1 26L10 4h2l7 16M5 18h11" fill="none" stroke="#555" stroke-width="2"/><path d="M28 8L18 22l3 3 8-14z" fill="#fff" stroke="#555"/><path d="M18 22c-4 0-3 5-8 6 4 2 11 2 11-3z" fill="#8ec3e8" stroke="#4b8dbd"/></svg><svg class="chev"><use href="#chev"/></svg></div><span>Styles</span></div>
      <div class="rg narrow"><div><svg class="big" viewBox="0 0 30 30"><rect x="10" y="1" width="10" height="19" rx="5" fill="#8fc4ea" stroke="#5791bb"/><path d="M6 13c0 14 18 14 18 0M15 24v5" fill="none" stroke="#555" stroke-width="1.500"/></svg></div><span>Dictate</span></div>
      <div class="rg wide off"><div><svg class="big" viewBox="0 0 30 30"><path d="M20 2H3v26h20V14" fill="none" stroke="#bcd0dc" stroke-width="1.500"/><path d="M8 18L20 7l6 5-13 11z" fill="#d3e3ec" stroke="#a8c2d1"/><path d="M20 2l8 8M12 15l5 5" stroke="#a8c2d1" stroke-width="2"/></svg><svg class="chev"><use href="#chev"/></svg></div><span>Sensitivity</span></div>
      <div class="nextr"><i class="exp"></i></div>
    </div>
    <div class="ruler"><span>1</span><span>2</span><span>3</span><span>4</span><span>5</span><span>6</span><span>7</span><span>8</span><span>9</span><span>10</span><span>11</span><span>12</span><span>13</span><span>14</span><span>15</span><span>16</span><svg class="m1" viewBox="0 0 10 20"><path d="M1 6l4-4 4 4v3H1zM1 10h8v4H1z" fill="#fff" stroke="#777"/></svg><svg class="m2" viewBox="0 0 10 20"><path d="M1 6l4-4 4 4v4H1z" fill="#fff" stroke="#777"/></svg></div>
    <article class="page">
      <span class="mark" aria-hidden="true">DRAFT</span>
      <p><span>6.1.3 &nbsp;Pedoman Penilaian Kemampuan Lahan</span></p>
      <p><span class="j ind">Penilaian kemampuan lahan dilakukan berdasarkan kriteria faktor-faktor penghambat</span><span>yang telah ditetapkan oleh ahli sebagaimana Tabel 21.</span></p>
      <figure>
        <span class="anchor">✢</span>
        <table class="land">
          <caption>Tabel 21 Penilaian kemampuan lahan</caption>
          <colgroup><col class="l1"><col class="l2"><col class="l3"><col class="l4"><col class="l4"><col class="l5"><col class="l5"><col class="l5"><col class="l5"><col class="l5"></colgroup>
          <thead><tr><th rowspan="2">No.</th><th rowspan="2">Faktor</th><th colspan="8">Kelas Kemampuan Lahan</th></tr>
          <tr><th>I</th><th>II</th><th>III</th><th>IV</th><th>V</th><th>VI</th><th>VII</th><th>VIII</th></tr></thead>
          <tbody>
          <tr><td>1.</td><td>Tekstur (t)</td><td></td><td></td><td></td><td></td><td></td><td></td><td></td><td></td></tr>
          <tr><td>2.</td><td class="in"><b>a.</b>Lapisan atas</td><td>t2/t3</td><td>t1/t4</td><td>t1/t4</td><td>*</td><td>*</td><td>*</td><td>*</td><td>t5</td></tr>
          <tr><td>3.</td><td class="in"><b>b.</b>Lapisan bawah</td><td>t2/t4</td><td>t1/t4</td><td>t1/t4</td><td>*</td><td>*</td><td>*</td><td>*</td><td>t5</td></tr>
          <tr><td>4.</td><td>Lereng permukaan (%)</td><td>l0</td><td>l1</td><td>l2</td><td>l3</td><td>*</td><td>l4</td><td>l5</td><td>l6</td></tr>
          <tr><td>5.</td><td>Drainase</td><td>d0/d1</td><td>d2</td><td>d3</td><td>d4</td><td>**</td><td>*</td><td>*</td><td>*</td></tr>
          <tr><td>6.</td><td>Kedalaman efektif</td><td>k0</td><td>k0</td><td>k1</td><td>k2</td><td>*</td><td>k3</td><td>*</td><td>*</td></tr>
          <tr><td>7.</td><td>Keadaan erosi</td><td>e0</td><td>e1</td><td class="sh">e1</td><td>e2</td><td>*</td><td>e3</td><td>e4</td><td>*</td></tr>
          <tr><td>8.</td><td>Kerikil/batuan</td><td>b0</td><td>b0</td><td>b0</td><td>b1</td><td>b2</td><td>*</td><td>*</td><td class="sh">b3</td></tr>
          <tr><td>9.</td><td>Banjir</td><td>o0</td><td>o1</td><td>02</td><td>03</td><td>o4</td><td>*</td><td>*</td><td>*</td></tr>
          </tbody>
        </table>
        <figcaption>Keterangan:<br><b>*</b>= dapat mempunyai sembarang sifat faktor penghambat dari kelas yang lebih rendah.<br><b>**</b>= permukaan tanah selalu tergenang air</figcaption>
      </figure>
      <p><span class="j ind">Klasifikasi kemampuan lahan didasarkan pada kelas faktor penghambat paling besar</span><span class="j">diantara seluruh sifat-sifat fisik tanah yang menjadi faktor penghambat. Sebagai contoh, pada</span><span class="j">SPT no. 12 KPH Unit XXX Kalimantan Tengah, sifat fisik tanah yang tersedia di SPT terdiri</span><span>dari:</span></p>
      <ol><li>Tekstur agak halus</li><li>Kedalaman efektif sangat dangkal</li><li>Drainase baik</li><li>Lereng datar</li></ol>
      <p><span class="j ind2">Berdasarkan data tersebut, nilai dari faktor penghambat secara berturut-turut adalah t2,</span><span class="j">k3, d1, dan k0. Sehingga, berdasarkan hasil matching dengan kriteria klasifikasi kemampuan</span><span class="j">lahan (Tabel 21), penilaian kelas kemampuan lahan untuk setiap faktor penghambat secara</span><span class="j">berturut-turut adalah I, VI, I, dan I. Oleh karena itu, kelas kemampuan lahan untuk SPT no. 12</span><span class="j">adalah kelas VI dengan faktor penghambat lereng yang dapat ditulis dengan notasi VI-l, karena</span></p>
      <div class="pageno"><i></i><span>114</span><i></i></div>
    </article>
    <footer class="wstatus">
      <button class="focus"><svg viewBox="0 0 20 20"><path d="M1 6V2h5M14 2h5v4M19 14v4h-5M6 18H1v-4M6 6h8v8H6z" fill="none" stroke="#555" stroke-width="1.500"/></svg>Focus</button>
      <button class="v on"><svg viewBox="0 0 20 20"><path d="M3 2h14v16H3zM5 6h10M5 9h10M5 12h10M5 15h10" fill="none" stroke="#555" stroke-width="1.500"/></svg></button>
      <button class="v"><svg viewBox="0 0 20 20"><path d="M2 2h13v14H2zM4 5h9M4 8h9M4 11h5" fill="none" stroke="#555" stroke-width="1.500"/><circle cx="14" cy="13" r="5" fill="#eee" stroke="#555" stroke-width="1.500"/><path d="M9 13h10M14 8v10" stroke="#555"/></svg></button>
      <button class="v"><svg viewBox="0 0 20 20"><path d="M2 4h12M6 8h12M6 12h12M9 16h9" stroke="#555" stroke-width="1.500"/></svg></button>
      <button class="v"><svg viewBox="0 0 20 20"><path d="M2 3h16M2 8h16M2 13h16M2 18h10" stroke="#555" stroke-width="1.500"/></svg></button>
      <button class="pm">−</button><input type="range" min="0" max="100" value="50" aria-label="Zoom"><button class="pm">+</button><span>96%</span>
    </footer>
  </section>
  </div>
</div>
</main>
</body>
</html>
```

FILE: styles.css
```css
* { box-sizing: border-box; }
body { margin: 0; background: #000; color: #222; font: 11px/14px Inter, "Liberation Sans", sans-serif; }
button, input, select { font: inherit; color: inherit; margin: 0; padding: 0; border: 0; background: none; min-width: 0; outline: 0; }
button { display: flex; align-items: center; justify-content: center; }
a { color: inherit; text-decoration: none; }
h1, h2, p, ul, ol, figure { margin: 0; padding: 0; font-weight: 500; }
i { font-style: normal; }
svg { display: block; flex: none; }
.defs { position: absolute; width: 0; height: 0; }
.screen { padding: 0 5%; min-height: 100vh; display: flex; }
.desktop { flex: 1; min-width: 0; background: #fff; display: flex; flex-direction: column; padding-bottom: 61px; }

/* system menu bar */
.menubar { width: 58.2%; height: 19px; background: #d2e5f3; display: flex; align-items: center; gap: 14px; padding-left: 15px; overflow: hidden; white-space: nowrap; font-weight: 500; color: #111; border-bottom: 1px solid #c2d3df; }
.menubar .app { font-weight: 700; }
.apple { width: 13px; height: 13px; }

.windows { flex: 1; display: grid; grid-template-columns: 781fr 371fr; }
.qgis { display: flex; flex-direction: column; min-width: 0; background: #ececec; border-radius: 8px 8px 6px 6px; border-bottom: 1px solid #777; margin-top: 2px; overflow: hidden; border-right: 1px solid #bbb; }
.titlebar { height: 21px; background: #f5f8f7; display: flex; align-items: center; gap: 7px; padding: 0 0 3px 6px; }
.titlebar h1 { flex: 1; text-align: center; font-size: 11px; line-height: 14px; font-weight: 600; color: #444; padding-right: 54px; }
.light { width: 9px; height: 9px; border-radius: 50%; }
.red { background: #ed5c60; } .amber { background: #f4bc3d; } .green { background: #34cb48; }

.toolbar { height: 31px; display: flex; align-items: center; border-top: 1px solid #e2e2e2; border-bottom: 1px solid #c4c4c4; background: linear-gradient(#f4f4f4, #e9e9e9); padding-left: 1px; }
.tb { flex: 1 1 0; height: 26px; border: 1px solid transparent; position: relative; }
.tb svg { width: 20px; height: 20px; }
.on { background: #d9d9d9; border: 1px solid #b0b0b0; border-radius: 2px; }
.sub { position: relative; }
.sub::after { content: ""; position: absolute; right: 1px; bottom: 1px; border: 2px solid transparent; border-top-color: #333; border-bottom: 0; }
.grip { flex: 0 0 9px; height: 14px; background: radial-gradient(circle, #c4c4c4 1px, transparent 1px) center / 3px 3px; background-clip: content-box; padding: 0 3px; }
.grip.wide { flex-basis: 13px; padding: 0 5px; }
.dd { flex: 0 0 9px; }
.dd::before, .tri { content: ""; flex: none; border: 3px solid transparent; border-top: 4px solid #444; border-bottom: 0; }
.more { flex: 0 0 14px; font: 14px/14px Roboto, sans-serif; color: #444; padding-bottom: 2px; }
.gap30 { flex: 0 0 30px; } .gap20 { flex: 0 0 21px; } .gap68 { flex: 0 0 68px; } .gap12 { flex: 0 0 12px; }
.dark { width: 53px; background: #5c5c5c; color: #ddd; font-size: 10px; height: 18px; display: flex; align-items: center; gap: 8px; padding-left: 3px; flex: none; white-space: nowrap; }
.dark.roi { width: 51px; }
.dark input { appearance: none; width: 6px; height: 6px; border-radius: 50%; background: #aaa; border: 1px solid #888; }
.tag { background: #555; color: #fff; font-weight: 600; height: 16px; line-height: 16px; padding: 0 1px; flex: none; margin: 0 1px; font-size: 10px; }
.combo, .spin { height: 19px; display: flex; align-items: center; background: #fff; border: 1px solid #c3c3c3; border-radius: 2px; flex: none; }
.combo select { appearance: none; flex: 1; padding-left: 3px; }
.combo .tri { margin: 0 5px; }
.rgbsel { width: 63px; margin-left: 1px; }
.spin input { flex: 1; width: 10px; padding-left: 3px; }
.ud { flex: 0 0 11px; align-self: stretch; display: flex; flex-direction: column; justify-content: center; align-items: center; gap: 4px; border-left: 1px solid #ddd; background: #f3f3f3; }
.ud::before, .ud::after { content: ""; border: 3px solid transparent; border-bottom: 3px solid #444; border-top: 0; }
.ud::after { border-bottom: 0; border-top: 3px solid #444; }
.w79 { width: 79px; } .w48 { width: 48px; }

/* docks */
.work { flex: 1; min-height: 0; display: grid; grid-template-columns: 116px minmax(0, 1fr) 55px; gap: 5px; padding-top: 1px; font-family: Roboto, "Liberation Sans", sans-serif; }
.left, .right, .center, .attr { display: flex; flex-direction: column; min-width: 0; min-height: 0; }
.dockhead { height: 17px; display: flex; align-items: center; gap: 2px; padding: 0 1px 0 3px; flex: none; }
.dockhead h2 { flex: 1; font: 500 9px/12px Inter, sans-serif; white-space: nowrap; }
.dockhead svg { width: 9px; height: 9px; }
.docktools { height: 22px; flex: none; display: flex; align-items: center; padding-left: 3px; }
.docktools button { width: 20px; flex: none; }
.docktools svg { width: 14px; height: 14px; }
.docktools .end { margin-left: auto; width: 14px; }
.treebox { display: grid; grid-template-columns: minmax(0, 1fr) 11px; grid-template-rows: minmax(0, 1fr) 11px; background: #fff; border: 1px solid #c6c6c6; overflow: hidden; min-height: 0; }
.browser { height: 155px; flex: none; }
.tree { list-style: none; height: 145px; padding-top: 1px; display: flex; flex-direction: column; overflow: hidden; grid-row: 1; grid-column: 1; }
.tree li { flex: 1; display: flex; align-items: center; white-space: nowrap; line-height: 14px; min-height: 0; }
.tree li > i { width: 14px; display: flex; flex: none; padding-left: 4px; }
.exp::before { content: ""; border: 3px solid transparent; border-left: 4px solid #555; border-right: 0; }
.tree svg { width: 13px; height: 13px; margin-right: 5px; }
.vbar { grid-row: 1; grid-column: 2; display: flex; flex-direction: column; background: #dedede; border-left: 1px solid #ccc; }
.hbar { grid-row: 2; grid-column: 1; display: flex; background: #dedede; border-top: 1px solid #ccc; }
.vbar > i, .hbar > i { flex: 0 0 11px; background: #f8f8f8; display: flex; align-items: center; justify-content: center; }
.vbar b, .hbar b { background: #f9f9f9; border: 1px solid #ccc; display: block; }
.hbar s { flex: 0 0 264px; }
.hbar .rest { flex: 1; }
.t47 { height: 47px; } .t52 { width: 52px; } .t20 { height: 20px; } .t305 { height: 305px; }
.down { margin-top: auto; } .rt { margin-left: auto; }
.up::before { content: ""; border: 3px solid transparent; border-bottom-color: #444; border-top: 0; }
.down::before { content: ""; border: 3px solid transparent; border-top-color: #444; border-bottom: 0; }
.lt::before { content: ""; border: 3px solid transparent; border-right-color: #444; border-left: 0; }
.rt::before { content: ""; border: 3px solid transparent; border-left-color: #444; border-right: 0; }
.second { margin-top: 5px; }
.layers { flex: 1; background: #fff; border: 1px solid #d0d0d0; }
.layer { height: 17px; background: #dcdcdc; display: flex; align-items: center; gap: 5px; padding-left: 18px; font-weight: 700; text-decoration: underline; color: #000; }
.layer svg { width: 13px; height: 13px; }
.tick { appearance: none; width: 11px; height: 11px; background: #fff; border: 1px solid #bbb; border-radius: 2px; display: grid; place-items: center; flex: none; }
.tick:checked::before { content: "✓"; font: bold 10px/9px "DejaVu Sans", sans-serif; color: #111; }

.map { width: 100%; height: 210px; background: #fff; border: 1px solid #d0d0d0; flex: none; }
.attr { flex: 1; padding-top: 5px; }
.attr .dockhead { height: 17px; padding: 0 1px 0 5px; }
.attr .dockhead h2 { font: 400 10px/12px Roboto, sans-serif; }
.atools { height: 22px; display: flex; align-items: center; padding-left: 2px; flex: none; }
.atools button { width: 20px; height: 19px; flex: none; }
.atools svg { width: 14px; height: 14px; }
.atools i { width: 6px; flex: none; height: 12px; border-left: 1px solid #ccc; }
.calc { height: 24px; display: flex; align-items: center; gap: 4px; padding: 0 0 0 2px; flex: none; }
.combo small { font-size: 7px; line-height: 8px; color: #666; padding-left: 4px; font-weight: 600; }
.field { width: 103px; font-family: Inter, sans-serif; }
.expr { flex: 1; min-width: 0; } .expr input { flex: 1; }
.eps { width: 19px; height: 19px; background: #fafafa; border: 1px solid #c3c3c3; border-radius: 2px; color: #6a2b6e; font: bold 14px/14px "Liberation Sans", sans-serif; }
.btn { height: 16px; background: linear-gradient(#fff, #f3f3f3); border: 1px solid #c0c0c0; border-radius: 2px; font-size: 9px; font-weight: 500; padding: 0 4px; white-space: nowrap; }
.calc .btn + .btn { margin-left: -2px; }
.btn:disabled { color: #999; }
.tablewrap { position: relative; flex: 1; min-height: 0; display: grid; grid-template-columns: minmax(0, 1fr) 12px; grid-template-rows: minmax(0, 1fr) 12px; background: #fff; border: 1px solid #ccc; }
.clip { overflow: hidden; min-height: 0; height: 151px; }
.grid { border-collapse: collapse; table-layout: fixed; width: 100%; }
.c-no { width: 14px; } .c-blank { width: 41px; } .c-kef { width: 38px; } .c-dr { width: 63px; } .c-tx { width: 57px; } .c-lr { width: 52px; }
.grid thead th { height: 14px; font: 500 9px/12px Inter, sans-serif; padding: 0; background: #f1f1f1; border: 1px solid #ccc; border-top: 0; color: #222; }
.grid td { height: 24px; padding: 0 3px; border: 1px solid #dfe3e2; line-height: 14px; }
.grid tbody th { padding: 0; font: 500 9px/12px Inter, sans-serif; background: #f3f3f3; border: 1px solid #bbb; text-align: left; padding-left: 1px; }
.grid tbody tr:nth-child(even) td { background: #f3f6f5; }
.grid em { color: #777; }
.pointer { position: absolute; left: 380px; top: 66px; width: 60px; height: 60px; }
.halo { position: absolute; left: 0; top: 0; width: 40px; height: 40px; border-radius: 50%; background: rgba(250, 245, 90, .7); mix-blend-mode: multiply; }
.pointer svg { position: absolute; left: 19px; top: 18px; width: 9px; height: 15px; }
.tip { position: absolute; left: 21px; top: 37px; font: 9px/15px Inter, sans-serif; height: 17px; padding: 0 3px; background: #f8f8f8; border: 1px solid #333; }
.afoot { height: 24px; display: flex; align-items: center; gap: 1px; padding-left: 2px; flex: none; }
.showall { margin-right: auto; height: 18px; gap: 3px; padding: 0 2px; color: #222; }
.showall svg { width: 11px; height: 11px; }
.tri.small { border-width: 3px 2px 0; align-self: flex-end; margin-bottom: 2px; }
.view { width: 19px; height: 19px; } .view svg { width: 12px; height: 12px; }

.right .docktools { padding-left: 2px; }
.right .docktools .end { margin: 0 auto; }
.psearch { height: 19px; margin-bottom: 1px; flex: none; display: flex; align-items: center; gap: 5px; background: #fff; border: 1px solid #bbb; padding-left: 6px; color: #777; }
.psearch svg { width: 11px; height: 11px; } .psearch input { flex: 1; }
.proc { flex: 1; max-height: 407px; }
.proc .tree { height: 404px; }
.proc .tree li { font-size: 10px; }
.proc .tree li > i { width: 16px; padding-left: 5px; }
.proc .tree svg { margin-right: 4px; }

.status { height: 25px; display: flex; align-items: center; gap: 4px; padding: 0 24px 0 3px; font: 10px/14px Roboto, "Liberation Sans", sans-serif; background: linear-gradient(#ebebeb, #dedede); flex: none; }
.status .spin, .status .combo, .coord, .locate { height: 18px; background: #fafafa; border: 1px solid #bdbdbd; border-radius: 2px; }
.locate { width: 171px; flex: none; display: flex; align-items: center; gap: 7px; padding-left: 6px; color: #888; font-size: 11px; margin-right: 3px; }
.locate svg { width: 11px; height: 11px; }
.locate input { flex: 1; } input::placeholder { color: #888; opacity: 1; }
.coord { width: 83px; text-align: center; flex: none; white-space: pre; }
.bug { width: 14px; height: 14px; }
.cut { width: 3px; overflow: hidden; direction: rtl; font-size: 9px; margin-left: 4px; flex: none; }
.scale { width: 74px; } .lock { width: 11px; height: 13px; margin: 0 4px; }
.status .spin { width: 74px; }
.rotation { margin-left: 3px; }
.render { display: flex; align-items: center; gap: 5px; }
.crs { font-weight: 500; margin-left: 12px; gap: 2px; } .crs svg { width: 13px; height: 13px; }
.msg { margin-left: auto; } .msg svg { width: 13px; height: 13px; }

/* word processor */
.word { position: relative; min-width: 0; margin-top: 4px; display: flex; flex-direction: column; background: #fff; border-radius: 0 5px 4px 0; overflow: hidden; border-bottom: 1px solid #999; }
.word::after { content: ""; position: absolute; inset: 0 auto 0 0; width: 18px; background: linear-gradient(90deg, rgba(0, 0, 0, .22), transparent); pointer-events: none; }
.wtitle { height: 22px; flex: none; background: #4f82d2; color: #dfe8f8; display: flex; align-items: center; padding: 0 5px 0 1px; font-size: 9px; }
.wtitle svg { width: 13px; height: 13px; }
.wtitle button { width: 22px; }
.wtitle .faint { opacity: .4; }
.wdot { width: 10px; height: 10px; border-radius: 50%; background: #7186ac; border: 1px solid #5a6c90; margin-right: 6px; flex: none; }
.auto { display: flex; align-items: center; gap: 4px; margin: 0 5px 0 15px; font-weight: 500; }
.toggle { width: 31px; height: 11px; border-radius: 6px; background: #3f69b0; display: flex; align-items: center; gap: 3px; font-size: 6px; color: #a9c0e8; }
.toggle input { appearance: none; width: 10px; height: 10px; border-radius: 50%; background: #9ab5e6; flex: none; }
.wtitle .chev { width: 7px; height: 7px; }
.wmore { font-size: 18px; padding: 0 5px 3px 7px; }
.wtitle .wdoc { margin-left: 19px; width: 11px; height: 13px; }
.find { margin-left: auto; margin-right: 5px; }
.wtabs { height: 25px; flex: none; background: #f3f3f3; display: flex; align-items: center; padding-right: 8px; color: #555; font-weight: 600; font-size: 10px; }
.hometab { align-self: stretch; line-height: 23px; border-bottom: 2px solid #214b84; margin-bottom: 2px; padding-right: 1px; }
.dimmore { color: #bbb; font: 14px/14px Roboto, sans-serif; margin: 0 9px 2px 12px; }
.wtabs > svg { width: 12px; height: 12px; margin-right: 6px; }
.tell { margin-right: auto; }
.pill { background: #fff; border: 1px solid #e6e6e6; border-radius: 2px; height: 18px; color: #5878a4; padding: 0 4px; gap: 4px; margin-left: 9px; font-weight: 500; }
.pill svg { width: 11px; height: 11px; }
.ribbon { height: 58px; flex: none; background: #f4f4f4; display: flex; align-items: center; border-bottom: 1px solid #d5d5d5; font-size: 9px; color: #444; }
.rg { flex: 55 1 0; height: 48px; display: flex; flex-direction: column; align-items: center; justify-content: space-between; border-right: 1px solid #d5d5d5; padding: 1px 0 3px; line-height: 12px; }
.rg.wide { flex-grow: 61; } .rg.narrow { flex-grow: 49; } .rg.paste { flex-grow: 37; border: 0; }
.rg > div { display: flex; align-items: center; gap: 4px; }
.rg.paste > div { gap: 2px; }
.big { width: 25px; height: 25px; }
.rg .chev { width: 7px; height: 7px; }
.off { color: #aaa; }
.clipb { flex: 28 1 0; height: 48px; display: flex; flex-direction: column; align-items: center; justify-content: space-between; border-right: 1px solid #d5d5d5; }
.clipb svg { width: 13px; height: 13px; }
.nextr { flex: 20 1 0; align-self: stretch; display: flex; align-items: center; justify-content: flex-end; padding-right: 4px; background: linear-gradient(90deg, #f4f4f4 9px, #ccc 9px, #ccc 10px, #f8f8f8 10px); }
.nextr .exp { display: flex; }
.ruler { position: relative; height: 18px; flex: none; padding-left: 25px; margin-right: -3px; display: flex; font-size: 8px; line-height: 10px; color: #555; background: repeating-linear-gradient(90deg, #aaa 0 1px, transparent 1px 5px) 3px 8px / 100% 4px no-repeat, linear-gradient(90deg, #d2d2d2 36px, #fafafa 36px); }
.ruler span { flex: 1; text-align: center; }
.ruler svg { position: absolute; top: 5px; width: 8px; height: 16px; } .m1 { left: 32px; } .m2 { right: 6px; }

.page { position: relative; flex: 1; min-height: 0; overflow: hidden; padding: 3px 9px 0 16px; font: 9px/16px "Liberation Serif", serif; color: #111; }
.page > * { position: relative; }
.page p > span { display: block; white-space: nowrap; }
.page .j { text-align: justify; text-align-last: justify; white-space: normal; }
.ind { padding-left: 28px; } .page p > .ind2 { padding-left: 22px; }
.page > .mark { position: absolute; left: 10px; top: 130px; font: bold 140px/160px "Liberation Sans", sans-serif; color: #fcfcfc; transform: rotate(-50deg); }
.land { width: 320px; max-width: 100%; margin: 0 auto 0 13px; border-collapse: collapse; table-layout: fixed; line-height: 9px; }
.land caption { line-height: 15px; padding-top: 7px; height: 24px; }
.l1 { width: 21px; } .l2 { width: 99px; } .l3 { width: 28px; } .l4 { width: 27px; }
.land th, .land td { border: 1px solid #111; padding: 0 0 0 4px; height: 10px; white-space: nowrap; }
.land th { background: #dcdcdc; padding: 0; }
.land .in b { font-weight: 400; display: inline-block; width: 16px; margin-left: 6px; }
.land .sh { padding-left: 9px; }
.anchor { position: absolute; left: 3px; top: 14px; width: 9px; height: 9px; border: 1px solid #999; font: 8px/7px "DejaVu Sans", sans-serif; text-align: center; }
figcaption { font-size: 8px; line-height: 9px; margin: 1px 0 5px 16px; }
figcaption b { display: inline-block; width: 10px; }
.page ol { list-style: none; counter-reset: a; margin: 5px 0 0; }
.page li { counter-increment: a; display: flex; }
.page li::before { content: counter(a, lower-alpha) "."; width: 14px; margin-left: 2px; }
.pageno { display: flex; justify-content: space-between; margin: 5px -5px 0 -8px; color: #777; line-height: 18px; }
.pageno span { padding-left: 32px; }
.pageno i { width: 7px; height: 12px; border: 1px solid #999; border-width: 1px 1px 0 0; margin-top: 4px; }
.pageno i:last-child { border-width: 1px 0 0 1px; }
.wstatus { height: 20px; flex: none; background: #e9e9e9; border-top: 1px solid #ccc; display: flex; align-items: center; padding: 0 19px 0 36px; font-size: 10px; color: #555; gap: 4px; }
.wstatus svg { width: 12px; height: 12px; }
.focus { gap: 7px; margin-right: 8px; }
.v { width: 24px; height: 18px; } .v.on { border: 0; background: #cfcfcf; }
.pm { width: 14px; font-size: 14px; }
.wstatus input { flex: 1; width: 40px; appearance: none; height: 2px; background: #aaa; }
.wstatus input::-webkit-slider-thumb { appearance: none; width: 13px; height: 13px; border-radius: 50%; background: #fff; border: 1px solid #ccc; }
.wstatus > span { margin-left: 6px; }
```
